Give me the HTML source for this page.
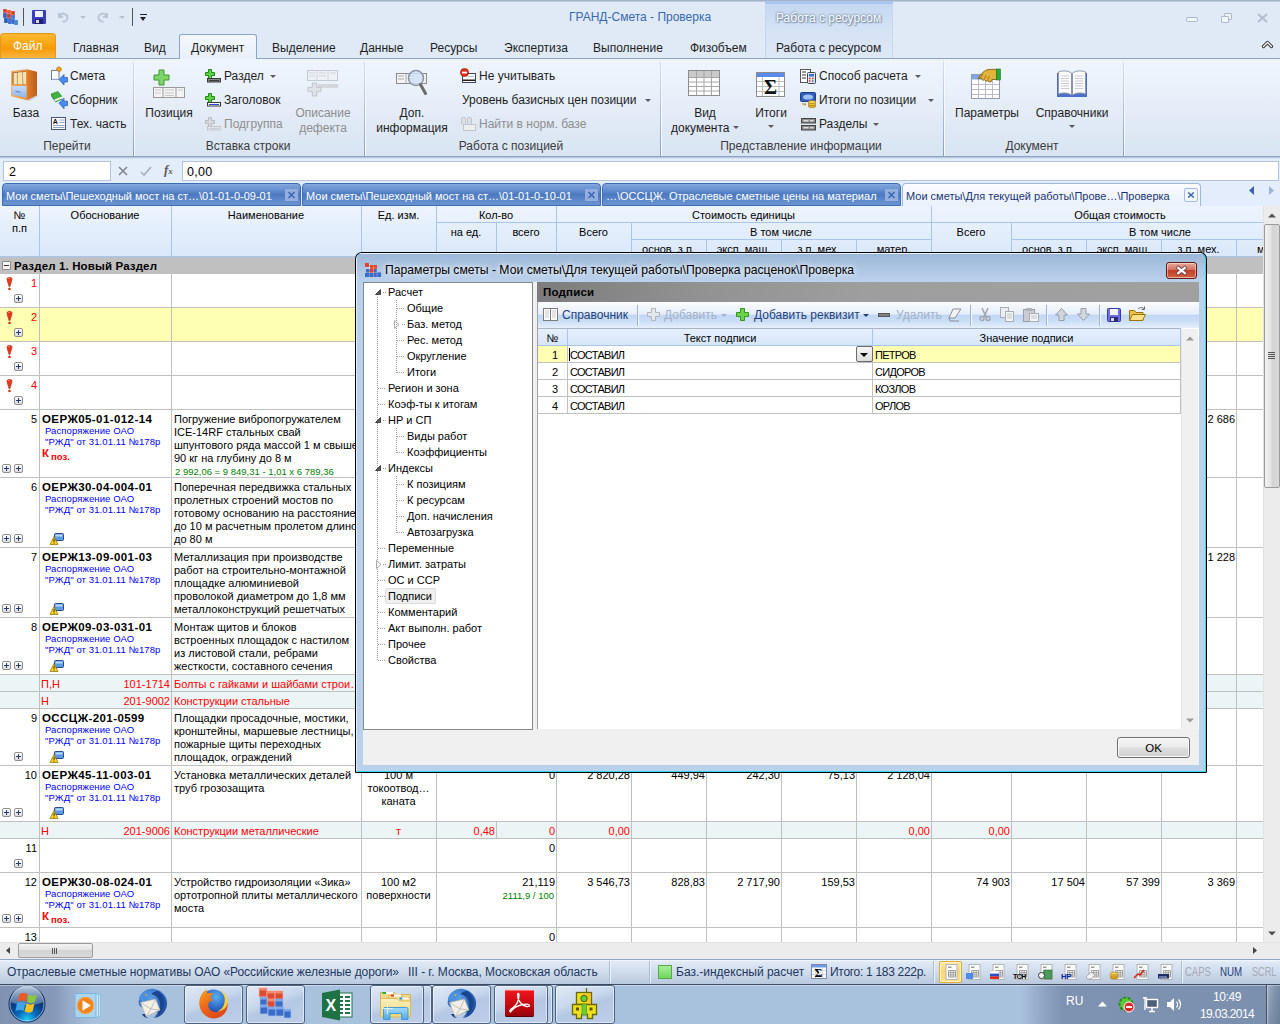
<!DOCTYPE html><html lang="ru"><head><meta charset="utf-8"><title>ГРАНД-Смета - Проверка</title><style>
*{box-sizing:border-box;margin:0;padding:0}
html,body{width:1280px;height:1024px;overflow:hidden}
body{position:relative;background:#dfe9f5;font-family:"Liberation Sans","DejaVu Sans",sans-serif;font-size:11px;color:#000;}
.a{position:absolute;white-space:nowrap}
.rb{position:absolute;white-space:nowrap;font-size:12px;line-height:14px;color:#1e1e1e}
.rb.dis{color:#8e8e8e}
.rb.cc{transform:translateX(-50%);text-align:center}
.t{position:absolute;white-space:nowrap;line-height:13px;font-size:11px;margin-top:1px}
.r{text-align:right}
.c{text-align:center}
.red{color:#f00}
.blue{color:#0000ff}
.grn{color:#008000}
.b{font-weight:bold}
.vl{position:absolute;width:1px;background:#c0c0c0}
.hl{position:absolute;height:1px;background:#c0c0c0}
.sep{position:absolute;top:61px;height:95px;width:2px;background:linear-gradient(#d5dfed,#b5c3d7 50%,#8c9db7) left/1px 100% no-repeat,linear-gradient(#f6f9fd,#f6f9fd) right/1px 100% no-repeat}
.arr{position:absolute;width:0;height:0;border-left:3px solid transparent;border-right:3px solid transparent;border-top:3px solid #5a5a5a}
svg{position:absolute;overflow:visible}
</style></head><body>
<div class="a" style="left:0;top:0;width:1280px;height:58px;background:#dfeaf6"></div>
<div class="a" style="left:0;top:0;width:1280px;height:2px;background:linear-gradient(#9aa8bc,#c9d6e6)"></div>
<div class="a" style="left:765px;top:1px;width:128px;height:57px;background:linear-gradient(#c3d7f1,#d6e3f5 30px,#dde8f6);border-left:1px solid #c9d6e8;border-right:1px solid #c9d6e8"></div>
<div class="a" style="left:765px;top:1px;width:128px;height:3px;background:#a8c6ee"></div>
<div class="rb" style="left:776px;top:11px;color:#fff;text-shadow:0 0 2px #6a7f9c,0 0 3px #7f93ad,1px 1px 1px #8a9ab0">Работа с ресурсом</div>
<div class="rb" style="left:569px;top:10px;color:#3a68ad">ГРАНД-Смета - Проверка</div>
<svg style="left:2px;top:8px" width="17" height="17" viewBox="0 0 17 17"><g stroke="#fff" stroke-opacity=".35" stroke-width=".5"><rect x="1" y="1" width="4" height="4" fill="#d8432f"/><rect x="5" y="2" width="4" height="4" fill="#e65a40"/><rect x="9" y="3" width="4" height="4" fill="#d8432f"/><rect x="1" y="5" width="4" height="5" fill="#3565bd"/><rect x="5" y="6" width="4" height="4" fill="#cf3a2a"/><rect x="9" y="7" width="4" height="4" fill="#3f74d0"/><rect x="2" y="10" width="4" height="5" fill="#2d5bb0"/><rect x="6" y="10" width="4" height="6" fill="#3b6fd0"/><rect x="10" y="11" width="3" height="5" fill="#2d5bb0"/><rect x="12" y="12" width="4" height="5" fill="#4a7fd8"/></g></svg>
<div class="a" style="left:23px;top:8px;width:1px;height:18px;background:#555"></div>
<svg style="left:32px;top:10px" width="14" height="14" viewBox="0 0 14 14"><rect x="0" y="0" width="14" height="14" rx="1" fill="#3c3cc0"/><rect x="3" y="1" width="8" height="6" fill="#f2f2ff"/><rect x="3" y="9" width="8" height="5" fill="#22226a"/><rect x="4" y="10" width="3" height="3" fill="#ddd"/></svg>
<svg style="left:57px;top:11px" width="12" height="12" viewBox="0 0 12 12"><path d="M2 2v4h4M2.5 6a4 4 0 1 1 3 4.5" fill="none" stroke="#bcc7d6" stroke-width="2"/></svg>
<div class="arr" style="left:80px;top:16px;border-top-color:#b7c1cf"></div>
<svg style="left:97px;top:11px" width="12" height="12" viewBox="0 0 12 12"><path d="M10 2v4h-4M9.5 6a4 4 0 1 0 -3 4.5" fill="none" stroke="#bcc7d6" stroke-width="2"/></svg>
<div class="arr" style="left:119px;top:16px;border-top-color:#b7c1cf"></div>
<div class="a" style="left:132px;top:8px;width:1px;height:18px;background:#555"></div>
<div class="a" style="left:140px;top:14px;width:7px;height:1px;background:#222"></div>
<div class="arr" style="left:140px;top:17px;border-top-color:#222;border-left-width:3.5px;border-right-width:3.5px;border-top-width:4px"></div>
<div class="a" style="left:1186px;top:17px;width:12px;height:5px;border:1px solid #aeb9c8;border-radius:2px;background:#f3f6fa"></div>
<div class="a" style="left:1224px;top:13px;width:8px;height:7px;border:1px solid #aeb9c8;border-radius:1px;background:#eef2f8"></div>
<div class="a" style="left:1221px;top:16px;width:8px;height:7px;border:1px solid #aeb9c8;border-radius:1px;background:#f3f6fa"></div>
<svg style="left:1257px;top:13px" width="11" height="10" viewBox="0 0 11 10"><path d="M1 1l9 8M10 1l-9 8" stroke="#b4bfce" stroke-width="2.2" fill="none"/></svg>
<svg style="left:1262px;top:40px" width="11" height="9" viewBox="0 0 11 9"><path d="M1.500 6.500l4-4 4 4" fill="none" stroke="#3a3a3a" stroke-width="3.200" stroke-linecap="round" stroke-linejoin="round"/><path d="M1.500 6.500l4-4 4 4" fill="none" stroke="#fff" stroke-width="1.200" stroke-linecap="round" stroke-linejoin="round"/></svg>
<div class="a" style="left:0;top:58px;width:1280px;height:1px;background:#8ba5c7"></div>
<div class="a" style="left:0;top:33px;width:56px;height:25px;border-radius:4px 4px 0 0;border:1px solid #e39a1c;border-bottom:none;background:linear-gradient(#fbb832,#f9a616 40%,#f59a0a 60%,#fab63a)"></div>
<div class="rb" style="left:13px;top:39px;color:#fff">Файл</div>
<div class="a" style="left:179px;top:34px;width:78px;height:26px;border:1px solid #8ba5c7;border-bottom:none;border-radius:3px 3px 0 0;background:linear-gradient(#f4f8fd,#e8eff9)"></div>
<div class="rb" style="left:73px;top:41px">Главная</div>
<div class="rb" style="left:144px;top:41px">Вид</div>
<div class="rb" style="left:191px;top:41px">Документ</div>
<div class="rb" style="left:272px;top:41px">Выделение</div>
<div class="rb" style="left:360px;top:41px">Данные</div>
<div class="rb" style="left:430px;top:41px">Ресурсы</div>
<div class="rb" style="left:504px;top:41px">Экспертиза</div>
<div class="rb" style="left:593px;top:41px">Выполнение</div>
<div class="rb" style="left:690px;top:41px">Физобъем</div>
<div class="rb" style="left:776px;top:41px">Работа с ресурсом</div>
<div class="a" style="left:0;top:59px;width:1280px;height:97px;background:linear-gradient(#eff5fd,#e8f0fa 35%,#dfe9f5 70%,#d9e5f3)"></div>
<div class="a" style="left:0;top:156px;width:1280px;height:3px;background:linear-gradient(#8da2c0,#8da2c0 1px,#b9c9df 1px,#b9c9df 2px,#d5e1f1 2px)"></div>
<div class="sep" style="left:133px"></div>
<div class="sep" style="left:364px"></div>
<div class="sep" style="left:660px"></div>
<div class="sep" style="left:943px"></div>
<div class="sep" style="left:1123px"></div>
<div class="rb cc" style="left:67px;top:139px;color:#3b3b3b">Перейти</div>
<div class="rb cc" style="left:248px;top:139px;color:#3b3b3b">Вставка строки</div>
<div class="rb cc" style="left:511px;top:139px;color:#3b3b3b">Работа с позицией</div>
<div class="rb cc" style="left:801px;top:139px;color:#3b3b3b">Представление информации</div>
<div class="rb cc" style="left:1032px;top:139px;color:#3b3b3b">Документ</div>
<div class="rb cc" style="left:26px;top:106px">База</div>
<div class="rb" style="left:70px;top:69px">Смета</div>
<div class="rb" style="left:70px;top:93px">Сборник</div>
<div class="rb" style="left:70px;top:117px">Тех. часть</div>
<div class="rb cc" style="left:169px;top:106px">Позиция</div>
<div class="rb" style="left:224px;top:69px">Раздел</div>
<div class="arr" style="left:270px;top:75px"></div>
<div class="rb" style="left:224px;top:93px">Заголовок</div>
<div class="rb dis" style="left:224px;top:117px">Подгруппа</div>
<div class="rb cc dis" style="left:323px;top:106px">Описание</div>
<div class="rb cc dis" style="left:323px;top:121px">дефекта</div>
<div class="rb cc" style="left:412px;top:106px">Доп.</div>
<div class="rb cc" style="left:412px;top:121px">информация</div>
<div class="rb" style="left:479px;top:69px">Не учитывать</div>
<div class="rb" style="left:462px;top:93px">Уровень базисных цен позиции</div>
<div class="arr" style="left:645px;top:99px"></div>
<div class="rb dis" style="left:479px;top:117px">Найти в норм. базе</div>
<div class="rb cc" style="left:705px;top:106px">Вид</div>
<div class="rb" style="left:671px;top:121px">документа</div><div class="arr" style="left:733px;top:126px"></div>
<div class="rb cc" style="left:771px;top:106px">Итоги</div>
<div class="arr" style="left:768px;top:125px"></div>
<div class="rb" style="left:819px;top:69px">Способ расчета</div>
<div class="arr" style="left:915px;top:75px"></div>
<div class="rb" style="left:819px;top:93px">Итоги по позиции</div>
<div class="arr" style="left:928px;top:99px"></div>
<div class="rb" style="left:819px;top:117px">Разделы</div>
<div class="arr" style="left:873px;top:123px"></div>
<div class="rb cc" style="left:987px;top:106px">Параметры</div>
<div class="rb cc" style="left:1072px;top:106px">Справочники</div>
<div class="arr" style="left:1069px;top:125px"></div>
<svg style="left:10px;top:67px" width="30" height="36" viewBox="0 0 30 36"><defs><linearGradient id="gb1" x1="0" x2="1"><stop offset="0" stop-color="#f7b066"/><stop offset="1" stop-color="#ec9040"/></linearGradient><linearGradient id="gb2" x1="0" x2="1"><stop offset="0" stop-color="#e07e2c"/><stop offset="1" stop-color="#bd5c16"/></linearGradient><linearGradient id="gb3" x1="0" y1="0" x2="0" y2="1"><stop offset="0" stop-color="#c4dbf7"/><stop offset="1" stop-color="#8fb4e6"/></linearGradient></defs><path d="M1 4l16-1.800v31l-16-4z" fill="url(#gb1)"/><path d="M17 2.200l10 2.600v23.500l-10 5z" fill="url(#gb2)"/><path d="M2.500 5.500l13.500-1.300v13h-13.500z" fill="#8a5520"/><path d="M3.500 6l3.500-.3v11.500h-3.500zM7.500 5.500l4.500-.5 1 12.200h-5.500zM12.500 5.200l3.500-.4v12.400h-2.700z" fill="#f4e2b0"/><path d="M7.300 5.600v11.600M12.300 5.300l.8 11.900" stroke="#cfa868" stroke-width=".7"/><path d="M2 19h14.500v12l-14.500-3.300z" fill="url(#gb3)"/><path d="M5.500 23.500l5 1.200v1.400l-5-1.200z" fill="#6e8fc4"/><path d="M17 33.300l10-5 2 .3-9 5.400z" fill="#000" fill-opacity=".12"/></svg>
<svg style="left:50px;top:66px" width="19" height="21" viewBox="0 0 19 21"><rect x="1.500" y="4.500" width="7.500" height="9" fill="#fbfcff" stroke="#6f7f9e"/><path d="M2 12.500h7v1h-7z" fill="#c9d3e6"/><path d="M6.500 3.500c0-2 1.500-3 3-2.500c1.500 .5 2.200 1.500 1.800 3c-.5 1.500-2 1.800-3.300 1.300z" fill="#f2a41c" stroke="#a86c0c" stroke-width=".6"/><path d="M9 13.5l5-5v3h3.500v4.500h-3.500v3z" fill="#4a8cec" stroke="#2c62c0" stroke-width=".8" stroke-linejoin="round"/></svg>
<svg style="left:50px;top:90px" width="19" height="21" viewBox="0 0 19 21"><path d="M1 4l7-2.500 4 5-7.500 3z" fill="#42b23e" stroke="#2a8a2a" stroke-width=".6"/><path d="M4.500 9.500l7.500-3v2l-7 3z" fill="#eef4ee"/><path d="M1 4l3.500 5.500l.5 2-4-5.500z" fill="#2c8a2c"/><path d="M5 11.500l7-3 .2 1-7 3z" fill="#2f9a2f"/><path d="M9 13.2l5-5v3h3.500v4.500h-3.500v3z" fill="#4a8cec" stroke="#2c62c0" stroke-width=".8" stroke-linejoin="round"/></svg>
<svg style="left:51px;top:117px" width="15" height="13" viewBox="0 0 15 13"><rect x=".5" y=".5" width="14" height="12" fill="#fdfdff" stroke="#46557a"/><text x="1.800" y="7" font-size="7" font-family="Liberation Sans,sans-serif" font-weight="bold" fill="#111">A</text><path d="M8.500 3h5M8.500 5.500h5M2 8.500h11.500M2 10.500h11.500" stroke="#93a3c6" stroke-width="1"/></svg>
<svg style="left:152px;top:69px" width="34" height="30" viewBox="0 0 34 30"><path d="M7 1h5v5h5v5h-5v5h-5v-5h-5v-5h5z" fill="#7ed36a" stroke="#3c9a2c" stroke-width="1"/><rect x="1.5" y="18.5" width="31" height="10" fill="#f4f4f4" stroke="#9a9a9a"/><path d="M11 18.5v10M24 18.5v10" stroke="#9a9a9a"/><path d="M3 21h6M3 24h6M13 21h9M13 24h9M13 26.5h9M26 21h5" stroke="#c8c8c8"/></svg>
<svg style="left:205px;top:68px" width="17" height="16" viewBox="0 0 17 16"><path d="M3.5 1.5h3v3h3v3h-3v3h-3v-3h-3v-3h3z" fill="#5fd048" stroke="#1f8a12" stroke-width="1"/><rect x="2.500" y="10.500" width="13" height="3.500" fill="#8a8a8a" stroke="#3a3a3a"/><rect x="4" y="12" width="10" height="1" fill="#3a3a3a"/></svg>
<svg style="left:205px;top:92px" width="17" height="16" viewBox="0 0 17 16"><path d="M3.5 1.5h3v3h3v3h-3v3h-3v-3h-3v-3h3z" fill="#5fd048" stroke="#1f8a12" stroke-width="1"/><rect x="2.500" y="10.500" width="13" height="3.500" fill="#fff" stroke="#3a3a3a"/><rect x="4" y="12" width="10" height="1" fill="#2c45d8"/></svg>
<svg style="left:205px;top:116px" width="17" height="16" viewBox="0 0 17 16"><path d="M3.5 1.5h3v3h3v3h-3v3h-3v-3h-3v-3h3z" fill="#d6d9de" stroke="#b9bdc4" stroke-width="1"/><rect x="2.500" y="10.500" width="13" height="3.500" fill="#e3e5e9" stroke="#c3c7cd"/><rect x="4" y="12" width="10" height="1" fill="#c9ccd2"/></svg>
<svg style="left:306px;top:69px" width="34" height="30" viewBox="0 0 34 30"><rect x="1.5" y="1.5" width="30" height="10" fill="#eef1f5" stroke="#c4c9d1"/><path d="M11 1.5v10M22 1.5v10M3 4h6M3 7h6M13 4h7M13 7h7M24 4h6" stroke="#d0d4db"/><rect x="12" y="15" width="20" height="4" fill="#d4d8de"/><path d="M6.33333 14h4.33333v4.33333h4.33333v4.33333h-4.33333v4.33333h-4.33333v-4.33333h-4.33333v-4.33333h4.33333z" fill="#dfe2e7" stroke="#c0c5cd" stroke-width="1"/></svg>
<svg style="left:395px;top:69px" width="36" height="32" viewBox="0 0 36 32"><rect x="1.5" y="4.5" width="30" height="10" fill="#f4f4f4" stroke="#8a8a8a"/><path d="M11 4.5v10M3 7h6M3 10h6M13 7h6M13 10h6" stroke="#aaa"/><circle cx="21" cy="9" r="7.5" fill="#cfe2f7" fill-opacity=".85" stroke="#8b97a8" stroke-width="1.6"/><path d="M25.5 15.5l5 9" stroke="#6a6a6a" stroke-width="3" stroke-linecap="round"/></svg>
<svg style="left:460px;top:68px" width="17" height="16" viewBox="0 0 17 16"><rect x="2.500" y="5.500" width="13" height="9" fill="#fff" stroke="#3c4660"/><rect x="3" y="11.500" width="12" height="1.500" fill="#222"/><path d="M8 8.500h6" stroke="#b8c0d0"/><circle cx="4.500" cy="4.500" r="4" fill="#e23424" stroke="#a01808" stroke-width=".8"/><rect x="2" y="3.700" width="5" height="1.700" fill="#fff"/></svg>
<svg style="left:460px;top:116px" width="17" height="16" viewBox="0 0 17 16"><rect x="3.5" y="8.5" width="12" height="6" fill="#eceef1" stroke="#c2c6cc"/><rect x="1.5" y="1.5" width="4" height="7" rx="1" fill="#dcdfe4" stroke="#bfc3ca"/><rect x="7.5" y="1.5" width="4" height="7" rx="1" fill="#dcdfe4" stroke="#bfc3ca"/></svg>
<svg style="left:688px;top:70px" width="33" height="28" viewBox="0 0 33 28"><rect x=".5" y=".5" width="31" height="25" fill="#fff" stroke="#8c8c8c"/><rect x="1" y="1" width="30" height="6" fill="#c9c9c9"/><path d="M1 7.5h30M1 12h30M1 16.5h30M1 21h30M8.5 1v24M16 1v24M23.5 1v24" stroke="#a6a6a6"/></svg>
<svg style="left:756px;top:72px" width="30" height="26" viewBox="0 0 30 26"><rect x=".5" y=".5" width="28" height="24" fill="#fff" stroke="#8c8c8c"/><rect x="1" y="1" width="27" height="4" fill="#5b8bea"/><path d="M1 9.5h27M1 14.500h27M1 19.500h27M6.500 5v19M23 5v19" stroke="#bdbdbd"/><text x="8" y="22" font-size="20" font-weight="bold" font-family="Liberation Serif,serif" fill="#111">Σ</text></svg>
<svg style="left:800px;top:68px" width="17" height="17" viewBox="0 0 17 17"><rect x=".5" y="1.500" width="10" height="13" fill="#fff" stroke="#555"/><path d="M2 4h4M2 7h4M2 10h4" stroke="#333"/><rect x="7.500" y="4.500" width="8" height="11" rx="1" fill="#dfe6f2" stroke="#445"/><rect x="9" y="6" width="5" height="2.500" fill="#3b6fd0"/><path d="M9 10.500h1.500M12 10.500h1.500M9 13h1.500" stroke="#d03020" stroke-width="1.400"/><path d="M12 13h1.500" stroke="#3060c0" stroke-width="1.400"/></svg>
<svg style="left:800px;top:92px" width="17" height="17" viewBox="0 0 17 17"><rect x=".5" y=".5" width="15" height="9" rx="1" fill="#2f5fc0" stroke="#1c3f8a"/><ellipse cx="8" cy="5" rx="5" ry="2.600" fill="#9ec0f2"/><ellipse cx="12" cy="14" rx="3.800" ry="1.600" fill="#e9b52a" stroke="#9a6c0a" stroke-width=".6"/><ellipse cx="12" cy="12" rx="3.800" ry="1.600" fill="#f2c640" stroke="#9a6c0a" stroke-width=".6"/><ellipse cx="12" cy="10" rx="3.800" ry="1.600" fill="#f7d45a" stroke="#9a6c0a" stroke-width=".6"/><path d="M2 12h4l-1.500 1.500" stroke="#c07a10" fill="none"/></svg>
<svg style="left:801px;top:118px" width="15" height="13" viewBox="0 0 15 13"><rect x=".5" y=".5" width="14" height="4.500" fill="#8a8a8a" stroke="#444"/><path d="M2.500 2.800h5M9 2.800h3.500" stroke="#fff" stroke-width="1"/><rect x=".5" y="7.500" width="14" height="4.500" fill="#8a8a8a" stroke="#444"/><path d="M2.500 9.800h5M9 9.800h3.500" stroke="#fff" stroke-width="1"/></svg>
<svg style="left:971px;top:68px" width="32" height="32" viewBox="0 0 32 32"><rect x=".5" y="6.500" width="28" height="24" fill="#fff" stroke="#8f9bb0"/><rect x="1" y="7" width="27" height="4.500" fill="#7da7ea"/><path d="M1 16.500h27M1 21.500h27M1 26.500h27M7.500 11.500v19M14.500 11.500v19M21.500 11.500v19" stroke="#b9bcc4"/><path d="M7 11c2-4 5-8 10-9.500l8.500-.2v10.200h-4.500l-1 2.500-2.500-.3-.3-1.200-2 .8-1.500-1.500-2 .5-1.200-2z" fill="#e3b33a" stroke="#7a5510" stroke-width=".8" stroke-linejoin="round"/><path d="M12 6l-3 4M15 7.500l-1.500 3M18 8.500l-1 3" stroke="#7a5510" stroke-width=".7" fill="none"/><rect x="25.500" y="1" width="4" height="11" fill="#2aa83a" stroke="#1c7a28" stroke-width=".6"/></svg>
<svg style="left:1056px;top:70px" width="32" height="28" viewBox="0 0 32 28"><path d="M1 3h30v24h-30z" fill="#4a6fc8"/><path d="M2.500 2c5-2 10-1 13 1v22c-3-2-8-3-13-1z" fill="#fdfdfd" stroke="#8a96b0"/><path d="M29.500 2c-5-2-10-1-13 1v22c3-2 8-3 13-1z" fill="#fdfdfd" stroke="#8a96b0"/><path d="M5 6h8M5 8.500h8M5 11h8M5 13.500h8M5 16h8M5 18.500h8M19 6h8M19 8.500h8M19 11h8M19 13.500h8M19 16h8M19 18.500h8" stroke="#b8bcc6" stroke-width=".8"/></svg>
<div class="a" style="left:0;top:159px;width:1280px;height:24px;background:#e4eefb"></div>
<div class="a" style="left:3px;top:161px;width:108px;height:20px;background:#fff;border:1px solid #b4c5db"></div>
<div class="a" style="left:9px;top:165px;font-size:12.500px;line-height:14px">2</div>
<svg style="left:118px;top:166px" width="10" height="10" viewBox="0 0 10 10"><path d="M1 1l8 8M9 1l-8 8" stroke="#7f8793" stroke-width="1.600"/></svg>
<svg style="left:140px;top:166px" width="12" height="10" viewBox="0 0 12 10"><path d="M1 6l3 3 7-8" stroke="#a9afb8" stroke-width="1.600" fill="none"/></svg>
<div class="a" style="left:164px;top:163px;font-family:'Liberation Serif',serif;font-style:italic;font-weight:bold;font-size:13px;line-height:14px;color:#5a5a5a">f<span style="font-size:9px">x</span></div>
<div class="a" style="left:182px;top:161px;width:1097px;height:20px;background:#fff;border:1px solid #b4c5db"></div>
<div class="a" style="left:187px;top:165px;font-size:12.500px;line-height:14px;letter-spacing:.3px">0,00</div>
<div class="a" style="left:0;top:183px;width:1280px;height:23px;background:#e3edfb"></div>
<div class="a" style="left:2px;top:183px;width:299px;height:23px;border:1px solid #3f6cb4;border-radius:4px 4px 0 0;background:linear-gradient(#8fb0e0,#7da2da 1px,#6690d0 6px,#4b78bf 50%,#5c88ca 75%,#6a93d0)"></div>
<div class="a" style="left:6px;top:189px;font-size:11px;line-height:14px;color:#fff">Мои сметы\Пешеходный мост на ст…\01-01-0-09-01</div>
<svg style="left:285px;top:189px" width="13" height="12" viewBox="0 0 13 12"><rect x="0" y="0" width="13" height="12" fill="#93aede"/><path d="M3.500 3l6 6M9.500 3l-6 6" stroke="#3c69b3" stroke-width="1.700"/></svg>
<div class="a" style="left:302px;top:183px;width:299px;height:23px;border:1px solid #3f6cb4;border-radius:4px 4px 0 0;background:linear-gradient(#8fb0e0,#7da2da 1px,#6690d0 6px,#4b78bf 50%,#5c88ca 75%,#6a93d0)"></div>
<div class="a" style="left:306px;top:189px;font-size:11px;line-height:14px;color:#fff">Мои сметы\Пешеходный мост на ст…\01-01-0-10-01</div>
<svg style="left:585px;top:189px" width="13" height="12" viewBox="0 0 13 12"><rect x="0" y="0" width="13" height="12" fill="#93aede"/><path d="M3.500 3l6 6M9.500 3l-6 6" stroke="#3c69b3" stroke-width="1.700"/></svg>
<div class="a" style="left:602px;top:183px;width:299px;height:23px;border:1px solid #3f6cb4;border-radius:4px 4px 0 0;background:linear-gradient(#8fb0e0,#7da2da 1px,#6690d0 6px,#4b78bf 50%,#5c88ca 75%,#6a93d0)"></div>
<div class="a" style="left:606px;top:189px;font-size:11px;line-height:14px;color:#fff">…\ОССЦЖ. Отраслевые сметные цены на материал</div>
<svg style="left:885px;top:189px" width="13" height="12" viewBox="0 0 13 12"><rect x="0" y="0" width="13" height="12" fill="#93aede"/><path d="M3.500 3l6 6M9.500 3l-6 6" stroke="#3c69b3" stroke-width="1.700"/></svg>
<div class="a" style="left:902px;top:183px;width:299px;height:23px;border:1px solid #9db7dd;border-bottom:none;border-radius:4px 4px 0 0;background:linear-gradient(#fafcff,#e9f1fc)"></div>
<div class="a" style="left:906px;top:189px;font-size:11px;line-height:14px;color:#1b3572">Мои сметы\Для текущей работы\Прове…\Проверка</div>
<svg style="left:1184px;top:188px" width="14" height="14" viewBox="0 0 14 14"><rect x=".5" y=".5" width="13" height="13" rx="1.500" fill="#f1f6fd" stroke="#a6bee4"/><path d="M4.200 4.500l5.600 5M9.800 4.500l-5.600 5" stroke="#3c64ac" stroke-width="1.600"/></svg>
<svg style="left:1249px;top:186px" width="6" height="9" viewBox="0 0 6 9"><path d="M5 0v9l-5-4.500z" fill="#3a62b0"/></svg>
<svg style="left:1268px;top:186px" width="6" height="9" viewBox="0 0 6 9"><path d="M1 0v9l5-4.500z" fill="#9fb4d6"/></svg>
<div class="a" style="left:0;top:206px;width:1263px;height:737px;background:#fff"></div>
<div class="a" style="left:0;top:206px;width:1263px;height:51px;background:linear-gradient(#eef4fd,#e3eefc 50%,#dbe8fb);border-bottom:1px solid #a8c5ec"></div>
<div class="a" style="left:39px;top:206px;width:1px;height:51px;background:#a8c5ec"></div>
<div class="a" style="left:171px;top:206px;width:1px;height:51px;background:#a8c5ec"></div>
<div class="a" style="left:361px;top:206px;width:1px;height:51px;background:#a8c5ec"></div>
<div class="a" style="left:436px;top:206px;width:1px;height:51px;background:#a8c5ec"></div>
<div class="a" style="left:556px;top:206px;width:1px;height:51px;background:#a8c5ec"></div>
<div class="a" style="left:931px;top:206px;width:1px;height:51px;background:#a8c5ec"></div>
<div class="a" style="left:496px;top:222px;width:1px;height:35px;background:#a8c5ec"></div>
<div class="a" style="left:631px;top:222px;width:1px;height:35px;background:#a8c5ec"></div>
<div class="a" style="left:1011px;top:222px;width:1px;height:35px;background:#a8c5ec"></div>
<div class="a" style="left:706px;top:239px;width:1px;height:18px;background:#a8c5ec"></div>
<div class="a" style="left:781px;top:239px;width:1px;height:18px;background:#a8c5ec"></div>
<div class="a" style="left:856px;top:239px;width:1px;height:18px;background:#a8c5ec"></div>
<div class="a" style="left:1086px;top:239px;width:1px;height:18px;background:#a8c5ec"></div>
<div class="a" style="left:1161px;top:239px;width:1px;height:18px;background:#a8c5ec"></div>
<div class="a" style="left:1236px;top:239px;width:1px;height:18px;background:#a8c5ec"></div>
<div class="a" style="left:436px;top:222px;width:827px;height:1px;background:#a8c5ec"></div>
<div class="a" style="left:631px;top:239px;width:300px;height:1px;background:#a8c5ec"></div>
<div class="a" style="left:1011px;top:239px;width:252px;height:1px;background:#a8c5ec"></div>
<div class="t c" style="left:0px;top:208px;width:39px">№</div>
<div class="t c" style="left:0px;top:221px;width:39px">п.п</div>
<div class="t c" style="left:39px;top:208px;width:132px">Обоснование</div>
<div class="t c" style="left:171px;top:208px;width:190px">Наименование</div>
<div class="t c" style="left:361px;top:208px;width:75px">Ед. изм.</div>
<div class="t c" style="left:436px;top:208px;width:120px">Кол-во</div>
<div class="t c" style="left:436px;top:225px;width:60px">на ед.</div>
<div class="t c" style="left:496px;top:225px;width:60px">всего</div>
<div class="t c" style="left:556px;top:208px;width:375px">Стоимость единицы</div>
<div class="t c" style="left:556px;top:225px;width:75px">Всего</div>
<div class="t c" style="left:631px;top:225px;width:300px">В том числе</div>
<div class="t c" style="left:631px;top:242px;width:75px">основ. з.п.</div>
<div class="t c" style="left:706px;top:242px;width:75px">эксп. маш.</div>
<div class="t c" style="left:781px;top:242px;width:75px">з.п. мех.</div>
<div class="t c" style="left:856px;top:242px;width:75px">матер.</div>
<div class="t c" style="left:931px;top:208px;width:378px">Общая стоимость</div>
<div class="t c" style="left:931px;top:225px;width:80px">Всего</div>
<div class="t c" style="left:1011px;top:225px;width:298px">В том числе</div>
<div class="t c" style="left:1011px;top:242px;width:75px">основ. з.п.</div>
<div class="t c" style="left:1086px;top:242px;width:75px">эксп. маш.</div>
<div class="t c" style="left:1161px;top:242px;width:75px">з.п. мех.</div>
<div class="t" style="left:1257px;top:242px">м</div>
<div class="a" style="left:0;top:257px;width:1263px;height:17px;background:#c0c0c0"></div>
<div class="a" style="left:2px;top:261px;width:9px;height:9px;border:1px solid #8a8a8a;background:#f4f4f4;border-radius:1px"></div><div class="a" style="left:4px;top:265px;width:5px;height:1px;background:#333"></div>
<div class="t b" style="left:14px;top:259px;font-size:11.500px;letter-spacing:.14px">Раздел 1. Новый Раздел</div>
<div class="hl" style="left:0;top:307px;width:1263px"></div>
<div class="a" style="left:0;top:308px;width:1263px;height:33px;background:#ffffb3"></div>
<div class="hl" style="left:0;top:341px;width:1263px"></div>
<div class="hl" style="left:0;top:375px;width:1263px"></div>
<div class="hl" style="left:0;top:409px;width:1263px"></div>
<div class="hl" style="left:0;top:477px;width:1263px"></div>
<div class="hl" style="left:0;top:547px;width:1263px"></div>
<div class="hl" style="left:0;top:617px;width:1263px"></div>
<div class="hl" style="left:0;top:674px;width:1263px"></div>
<div class="a" style="left:0;top:675px;width:1263px;height:16px;background:#ecf5f6"></div>
<div class="hl" style="left:0;top:691px;width:1263px"></div>
<div class="a" style="left:0;top:692px;width:1263px;height:16px;background:#ecf5f6"></div>
<div class="hl" style="left:0;top:708px;width:1263px"></div>
<div class="hl" style="left:0;top:765px;width:1263px"></div>
<div class="hl" style="left:0;top:821px;width:1263px"></div>
<div class="a" style="left:0;top:822px;width:1263px;height:16px;background:#ecf5f6"></div>
<div class="hl" style="left:0;top:838px;width:1263px"></div>
<div class="hl" style="left:0;top:872px;width:1263px"></div>
<div class="hl" style="left:0;top:927px;width:1263px"></div>
<div class="vl" style="left:39px;top:274px;height:668px"></div>
<div class="vl" style="left:171px;top:274px;height:668px"></div>
<div class="vl" style="left:361px;top:274px;height:668px"></div>
<div class="vl" style="left:436px;top:274px;height:668px"></div>
<div class="vl" style="left:496px;top:822px;height:16px"></div>
<div class="vl" style="left:556px;top:274px;height:668px"></div>
<div class="vl" style="left:631px;top:274px;height:668px"></div>
<div class="vl" style="left:706px;top:274px;height:668px"></div>
<div class="vl" style="left:781px;top:274px;height:668px"></div>
<div class="vl" style="left:856px;top:274px;height:668px"></div>
<div class="vl" style="left:931px;top:274px;height:668px"></div>
<div class="vl" style="left:1011px;top:274px;height:668px"></div>
<div class="vl" style="left:1086px;top:274px;height:668px"></div>
<div class="vl" style="left:1161px;top:274px;height:668px"></div>
<div class="vl" style="left:1236px;top:274px;height:668px"></div>
<svg style="left:6px;top:277px" width="7" height="14" viewBox="0 0 7 14"><path d="M1 1.500c0-1.500 5-1.500 5 0c0 3-1.500 5-2 8h-1c-.5-3-2-5-2-8z" fill="#e8391d" stroke="#a3220c" stroke-width=".6"/><circle cx="3.500" cy="12" r="1.300" fill="#d63015"/><path d="M2.200 2c.2-.8 1-.9 1.500-.7" stroke="#ffb09a" stroke-width=".8" fill="none"/></svg>
<div class="t r red" style="left:0;top:276px;width:37px">1</div>
<div class="a" style="left:14px;top:294px;width:9px;height:9px;border:1px solid #8e8e8e;border-radius:2px;background:linear-gradient(#fff,#dcdcdc)"></div>
<div class="a" style="left:16px;top:298px;width:5px;height:1px;background:#223a6e"></div><div class="a" style="left:18px;top:296px;width:1px;height:5px;background:#223a6e"></div>
<svg style="left:6px;top:311px" width="7" height="14" viewBox="0 0 7 14"><path d="M1 1.500c0-1.500 5-1.500 5 0c0 3-1.500 5-2 8h-1c-.5-3-2-5-2-8z" fill="#e8391d" stroke="#a3220c" stroke-width=".6"/><circle cx="3.500" cy="12" r="1.300" fill="#d63015"/><path d="M2.200 2c.2-.8 1-.9 1.500-.7" stroke="#ffb09a" stroke-width=".8" fill="none"/></svg>
<div class="t r red" style="left:0;top:310px;width:37px">2</div>
<div class="a" style="left:14px;top:328px;width:9px;height:9px;border:1px solid #8e8e8e;border-radius:2px;background:linear-gradient(#fff,#dcdcdc)"></div>
<div class="a" style="left:16px;top:332px;width:5px;height:1px;background:#223a6e"></div><div class="a" style="left:18px;top:330px;width:1px;height:5px;background:#223a6e"></div>
<svg style="left:6px;top:345px" width="7" height="14" viewBox="0 0 7 14"><path d="M1 1.500c0-1.500 5-1.500 5 0c0 3-1.500 5-2 8h-1c-.5-3-2-5-2-8z" fill="#e8391d" stroke="#a3220c" stroke-width=".6"/><circle cx="3.500" cy="12" r="1.300" fill="#d63015"/><path d="M2.200 2c.2-.8 1-.9 1.500-.7" stroke="#ffb09a" stroke-width=".8" fill="none"/></svg>
<div class="t r red" style="left:0;top:344px;width:37px">3</div>
<div class="a" style="left:14px;top:362px;width:9px;height:9px;border:1px solid #8e8e8e;border-radius:2px;background:linear-gradient(#fff,#dcdcdc)"></div>
<div class="a" style="left:16px;top:366px;width:5px;height:1px;background:#223a6e"></div><div class="a" style="left:18px;top:364px;width:1px;height:5px;background:#223a6e"></div>
<svg style="left:6px;top:379px" width="7" height="14" viewBox="0 0 7 14"><path d="M1 1.500c0-1.500 5-1.500 5 0c0 3-1.500 5-2 8h-1c-.5-3-2-5-2-8z" fill="#e8391d" stroke="#a3220c" stroke-width=".6"/><circle cx="3.500" cy="12" r="1.300" fill="#d63015"/><path d="M2.200 2c.2-.8 1-.9 1.500-.7" stroke="#ffb09a" stroke-width=".8" fill="none"/></svg>
<div class="t r red" style="left:0;top:378px;width:37px">4</div>
<div class="a" style="left:14px;top:396px;width:9px;height:9px;border:1px solid #8e8e8e;border-radius:2px;background:linear-gradient(#fff,#dcdcdc)"></div>
<div class="a" style="left:16px;top:400px;width:5px;height:1px;background:#223a6e"></div><div class="a" style="left:18px;top:398px;width:1px;height:5px;background:#223a6e"></div>
<div class="t r" style="left:0;top:412px;width:37px">5</div>
<div class="t b" style="left:42px;top:412px;font-size:11.500px;letter-spacing:.42px">ОЕРЖ05-01-012-14</div>
<div class="t blue" style="left:45px;top:424px;font-size:9.500px;line-height:11px;letter-spacing:.1px">Распоряжение ОАО<br>"РЖД" от 31.01.11 №178р</div>
<div class="t b red" style="left:42px;top:446px;font-size:11.500px">К<span style="font-size:9.500px;position:relative;top:3px;left:2px">поз.</span></div>
<div class="a" style="left:2px;top:464px;width:9px;height:9px;border:1px solid #8e8e8e;border-radius:2px;background:linear-gradient(#fff,#dcdcdc)"></div>
<div class="a" style="left:4px;top:468px;width:5px;height:1px;background:#223a6e"></div><div class="a" style="left:6px;top:466px;width:1px;height:5px;background:#223a6e"></div>
<div class="a" style="left:14px;top:464px;width:9px;height:9px;border:1px solid #8e8e8e;border-radius:2px;background:linear-gradient(#fff,#dcdcdc)"></div>
<div class="a" style="left:16px;top:468px;width:5px;height:1px;background:#223a6e"></div><div class="a" style="left:18px;top:466px;width:1px;height:5px;background:#223a6e"></div>
<div class="t" style="left:174px;top:412px">Погружение вибропогружателем<br>ICE-14RF стальных свай<br>шпунтового ряда массой 1 м свыше<br>90 кг на глубину до 8 м</div>
<div class="t grn" style="left:175px;top:464px;font-size:9.500px;letter-spacing:0">2 992,06 = 9 849,31 - 1,01 x 6 789,36</div>
<div class="t r" style="left:1161px;top:412px;width:74px">2 686</div>
<div class="t r" style="left:0;top:480px;width:37px">6</div>
<div class="t b" style="left:42px;top:480px;font-size:11.500px;letter-spacing:.42px">ОЕРЖ30-04-004-01</div>
<div class="t blue" style="left:45px;top:492px;font-size:9.500px;line-height:11px;letter-spacing:.1px">Распоряжение ОАО<br>"РЖД" от 31.01.11 №178р</div>
<svg style="left:50px;top:533px" width="14" height="12" viewBox="0 0 14 12"><rect x="4.500" y=".5" width="9" height="7" rx="1" fill="#5b9be6" stroke="#274c86"/><rect x="5.500" y="1.500" width="7" height="2" fill="#b8d6f8"/><path d="M4 3.500l4 8h-8z" fill="#f7d21e" stroke="#8a6d00" stroke-width=".7"/><rect x="3.600" y="6" width=".9" height="3" fill="#222"/><rect x="3.600" y="9.700" width=".9" height=".9" fill="#222"/></svg>
<div class="a" style="left:2px;top:534px;width:9px;height:9px;border:1px solid #8e8e8e;border-radius:2px;background:linear-gradient(#fff,#dcdcdc)"></div>
<div class="a" style="left:4px;top:538px;width:5px;height:1px;background:#223a6e"></div><div class="a" style="left:6px;top:536px;width:1px;height:5px;background:#223a6e"></div>
<div class="a" style="left:14px;top:534px;width:9px;height:9px;border:1px solid #8e8e8e;border-radius:2px;background:linear-gradient(#fff,#dcdcdc)"></div>
<div class="a" style="left:16px;top:538px;width:5px;height:1px;background:#223a6e"></div><div class="a" style="left:18px;top:536px;width:1px;height:5px;background:#223a6e"></div>
<div class="t" style="left:174px;top:480px">Поперечная передвижка стальных<br>пролетных строений мостов по<br>готовому основанию на расстояние<br>до 10 м расчетным пролетом длиной<br>до 80 м</div>
<div class="t r" style="left:0;top:550px;width:37px">7</div>
<div class="t b" style="left:42px;top:550px;font-size:11.500px;letter-spacing:.42px">ОЕРЖ13-09-001-03</div>
<div class="t blue" style="left:45px;top:562px;font-size:9.500px;line-height:11px;letter-spacing:.1px">Распоряжение ОАО<br>"РЖД" от 31.01.11 №178р</div>
<svg style="left:50px;top:603px" width="14" height="12" viewBox="0 0 14 12"><rect x="4.500" y=".5" width="9" height="7" rx="1" fill="#5b9be6" stroke="#274c86"/><rect x="5.500" y="1.500" width="7" height="2" fill="#b8d6f8"/><path d="M4 3.500l4 8h-8z" fill="#f7d21e" stroke="#8a6d00" stroke-width=".7"/><rect x="3.600" y="6" width=".9" height="3" fill="#222"/><rect x="3.600" y="9.700" width=".9" height=".9" fill="#222"/></svg>
<div class="a" style="left:2px;top:604px;width:9px;height:9px;border:1px solid #8e8e8e;border-radius:2px;background:linear-gradient(#fff,#dcdcdc)"></div>
<div class="a" style="left:4px;top:608px;width:5px;height:1px;background:#223a6e"></div><div class="a" style="left:6px;top:606px;width:1px;height:5px;background:#223a6e"></div>
<div class="a" style="left:14px;top:604px;width:9px;height:9px;border:1px solid #8e8e8e;border-radius:2px;background:linear-gradient(#fff,#dcdcdc)"></div>
<div class="a" style="left:16px;top:608px;width:5px;height:1px;background:#223a6e"></div><div class="a" style="left:18px;top:606px;width:1px;height:5px;background:#223a6e"></div>
<div class="t" style="left:174px;top:550px">Металлизация при производстве<br>работ на строительно-монтажной<br>площадке алюминиевой<br>проволокой диаметром до 1,8 мм<br>металлоконструкций решетчатых</div>
<div class="t r" style="left:1161px;top:550px;width:74px">1 228</div>
<div class="t r" style="left:0;top:620px;width:37px">8</div>
<div class="t b" style="left:42px;top:620px;font-size:11.500px;letter-spacing:.42px">ОЕРЖ09-03-031-01</div>
<div class="t blue" style="left:45px;top:632px;font-size:9.500px;line-height:11px;letter-spacing:.1px">Распоряжение ОАО<br>"РЖД" от 31.01.11 №178р</div>
<svg style="left:50px;top:660px" width="14" height="12" viewBox="0 0 14 12"><rect x="4.500" y=".5" width="9" height="7" rx="1" fill="#5b9be6" stroke="#274c86"/><rect x="5.500" y="1.500" width="7" height="2" fill="#b8d6f8"/><path d="M4 3.500l4 8h-8z" fill="#f7d21e" stroke="#8a6d00" stroke-width=".7"/><rect x="3.600" y="6" width=".9" height="3" fill="#222"/><rect x="3.600" y="9.700" width=".9" height=".9" fill="#222"/></svg>
<div class="a" style="left:2px;top:661px;width:9px;height:9px;border:1px solid #8e8e8e;border-radius:2px;background:linear-gradient(#fff,#dcdcdc)"></div>
<div class="a" style="left:4px;top:665px;width:5px;height:1px;background:#223a6e"></div><div class="a" style="left:6px;top:663px;width:1px;height:5px;background:#223a6e"></div>
<div class="a" style="left:14px;top:661px;width:9px;height:9px;border:1px solid #8e8e8e;border-radius:2px;background:linear-gradient(#fff,#dcdcdc)"></div>
<div class="a" style="left:16px;top:665px;width:5px;height:1px;background:#223a6e"></div><div class="a" style="left:18px;top:663px;width:1px;height:5px;background:#223a6e"></div>
<div class="t" style="left:174px;top:620px">Монтаж щитов и блоков<br>встроенных площадок с настилом<br>из листовой стали, ребрами<br>жесткости, составного сечения</div>
<div class="t red" style="left:41px;top:677px">П,Н</div>
<div class="t red r" style="left:39px;top:677px;width:131px">101-1714</div>
<div class="t red" style="left:174px;top:677px">Болты с гайками и шайбами строи…</div>
<div class="t red" style="left:41px;top:694px">Н</div>
<div class="t red r" style="left:39px;top:694px;width:131px">201-9002</div>
<div class="t red" style="left:174px;top:694px">Конструкции стальные</div>
<div class="t r" style="left:0;top:711px;width:37px">9</div>
<div class="t b" style="left:42px;top:711px;font-size:11.500px;letter-spacing:.42px">ОССЦЖ-201-0599</div>
<div class="t blue" style="left:45px;top:723px;font-size:9.500px;line-height:11px;letter-spacing:.1px">Распоряжение ОАО<br>"РЖД" от 31.01.11 №178р</div>
<svg style="left:50px;top:751px" width="14" height="12" viewBox="0 0 14 12"><rect x="4.500" y=".5" width="9" height="7" rx="1" fill="#5b9be6" stroke="#274c86"/><rect x="5.500" y="1.500" width="7" height="2" fill="#b8d6f8"/><path d="M4 3.500l4 8h-8z" fill="#f7d21e" stroke="#8a6d00" stroke-width=".7"/><rect x="3.600" y="6" width=".9" height="3" fill="#222"/><rect x="3.600" y="9.700" width=".9" height=".9" fill="#222"/></svg>
<div class="a" style="left:14px;top:752px;width:9px;height:9px;border:1px solid #8e8e8e;border-radius:2px;background:linear-gradient(#fff,#dcdcdc)"></div>
<div class="a" style="left:16px;top:756px;width:5px;height:1px;background:#223a6e"></div><div class="a" style="left:18px;top:754px;width:1px;height:5px;background:#223a6e"></div>
<div class="t" style="left:174px;top:711px">Площадки просадочные, мостики,<br>кронштейны, маршевые лестницы,<br>пожарные щиты переходных<br>площадок, ограждений</div>
<div class="t r" style="left:0;top:768px;width:37px">10</div>
<div class="t b" style="left:42px;top:768px;font-size:11.500px;letter-spacing:.42px">ОЕРЖ45-11-003-01</div>
<div class="t blue" style="left:45px;top:780px;font-size:9.500px;line-height:11px;letter-spacing:.1px">Распоряжение ОАО<br>"РЖД" от 31.01.11 №178р</div>
<svg style="left:50px;top:807px" width="14" height="12" viewBox="0 0 14 12"><rect x="4.500" y=".5" width="9" height="7" rx="1" fill="#5b9be6" stroke="#274c86"/><rect x="5.500" y="1.500" width="7" height="2" fill="#b8d6f8"/><path d="M4 3.500l4 8h-8z" fill="#f7d21e" stroke="#8a6d00" stroke-width=".7"/><rect x="3.600" y="6" width=".9" height="3" fill="#222"/><rect x="3.600" y="9.700" width=".9" height=".9" fill="#222"/></svg>
<div class="a" style="left:2px;top:808px;width:9px;height:9px;border:1px solid #8e8e8e;border-radius:2px;background:linear-gradient(#fff,#dcdcdc)"></div>
<div class="a" style="left:4px;top:812px;width:5px;height:1px;background:#223a6e"></div><div class="a" style="left:6px;top:810px;width:1px;height:5px;background:#223a6e"></div>
<div class="a" style="left:14px;top:808px;width:9px;height:9px;border:1px solid #8e8e8e;border-radius:2px;background:linear-gradient(#fff,#dcdcdc)"></div>
<div class="a" style="left:16px;top:812px;width:5px;height:1px;background:#223a6e"></div><div class="a" style="left:18px;top:810px;width:1px;height:5px;background:#223a6e"></div>
<div class="t" style="left:174px;top:768px">Установка металлических деталей<br>труб грозозащита</div>
<div class="t c" style="left:361px;top:768px;width:75px">100 м<br>токоотвод…<br>каната</div>
<div class="t r" style="left:496px;top:768px;width:59px">0</div>
<div class="t r" style="left:556px;top:768px;width:74px">2 820,28</div>
<div class="t r" style="left:631px;top:768px;width:74px">449,94</div>
<div class="t r" style="left:706px;top:768px;width:74px">242,30</div>
<div class="t r" style="left:781px;top:768px;width:74px">75,13</div>
<div class="t r" style="left:856px;top:768px;width:74px">2 128,04</div>
<div class="t red" style="left:41px;top:824px">Н</div>
<div class="t red r" style="left:39px;top:824px;width:131px">201-9006</div>
<div class="t red" style="left:174px;top:824px">Конструкции металлические</div>
<div class="t c red" style="left:361px;top:824px;width:75px">т</div>
<div class="t r red" style="left:436px;top:824px;width:59px">0,48</div>
<div class="t r red" style="left:496px;top:824px;width:59px">0</div>
<div class="t r red" style="left:556px;top:824px;width:74px">0,00</div>
<div class="t r red" style="left:856px;top:824px;width:74px">0,00</div>
<div class="t r red" style="left:931px;top:824px;width:79px">0,00</div>
<div class="t r" style="left:0;top:841px;width:37px">11</div>
<div class="a" style="left:14px;top:859px;width:9px;height:9px;border:1px solid #8e8e8e;border-radius:2px;background:linear-gradient(#fff,#dcdcdc)"></div>
<div class="a" style="left:16px;top:863px;width:5px;height:1px;background:#223a6e"></div><div class="a" style="left:18px;top:861px;width:1px;height:5px;background:#223a6e"></div>
<div class="t r" style="left:496px;top:841px;width:59px">0</div>
<div class="t r" style="left:0;top:875px;width:37px">12</div>
<div class="t b" style="left:42px;top:875px;font-size:11.500px;letter-spacing:.42px">ОЕРЖ30-08-024-01</div>
<div class="t blue" style="left:45px;top:887px;font-size:9.500px;line-height:11px;letter-spacing:.1px">Распоряжение ОАО<br>"РЖД" от 31.01.11 №178р</div>
<div class="t b red" style="left:42px;top:909px;font-size:11.500px">К<span style="font-size:9.500px;position:relative;top:3px;left:2px">поз.</span></div>
<div class="a" style="left:2px;top:914px;width:9px;height:9px;border:1px solid #8e8e8e;border-radius:2px;background:linear-gradient(#fff,#dcdcdc)"></div>
<div class="a" style="left:4px;top:918px;width:5px;height:1px;background:#223a6e"></div><div class="a" style="left:6px;top:916px;width:1px;height:5px;background:#223a6e"></div>
<div class="a" style="left:14px;top:914px;width:9px;height:9px;border:1px solid #8e8e8e;border-radius:2px;background:linear-gradient(#fff,#dcdcdc)"></div>
<div class="a" style="left:16px;top:918px;width:5px;height:1px;background:#223a6e"></div><div class="a" style="left:18px;top:916px;width:1px;height:5px;background:#223a6e"></div>
<div class="t" style="left:174px;top:875px">Устройство гидроизоляции «Зика»<br>ортотропной плиты металлического<br>моста</div>
<div class="t c" style="left:361px;top:875px;width:75px">100 м2<br>поверхности</div>
<div class="t r" style="left:496px;top:875px;width:59px">21,119</div>
<div class="t grn r" style="left:496px;top:888px;width:58px;font-size:9.500px">2111,9 / 100</div>
<div class="t r" style="left:556px;top:875px;width:74px">3 546,73</div>
<div class="t r" style="left:631px;top:875px;width:74px">828,83</div>
<div class="t r" style="left:706px;top:875px;width:74px">2 717,90</div>
<div class="t r" style="left:781px;top:875px;width:74px">159,53</div>
<div class="t r" style="left:931px;top:875px;width:79px">74 903</div>
<div class="t r" style="left:1011px;top:875px;width:74px">17 504</div>
<div class="t r" style="left:1086px;top:875px;width:74px">57 399</div>
<div class="t r" style="left:1161px;top:875px;width:74px">3 369</div>
<div class="t r" style="left:0;top:930px;width:37px">13</div>
<div class="t r" style="left:496px;top:930px;width:59px">0</div>
<div class="a" style="left:1263px;top:206px;width:17px;height:737px;background:#ececec;border-left:1px solid #e2e2e2"></div>
<div class="a" style="left:1264px;top:224px;width:16px;height:264px;border:1px solid #9b9b9b;border-radius:2px;background:linear-gradient(90deg,#f3f3f3,#e3e3e3 45%,#d3d3d3 50%,#dadada)"></div>
<div class="a" style="left:1268px;top:352px;width:7px;height:1px;background:#555"></div>
<div class="a" style="left:1268px;top:354px;width:7px;height:1px;background:#555"></div>
<div class="a" style="left:1268px;top:356px;width:7px;height:1px;background:#555"></div>
<div class="a" style="left:1268px;top:358px;width:7px;height:1px;background:#555"></div>
<svg style="left:1268px;top:213px" width="8" height="5" viewBox="0 0 8 5"><path d="M0 4.500l4-4 4 4z" fill="#505050"/></svg>
<svg style="left:1268px;top:931px" width="8" height="5" viewBox="0 0 8 5"><path d="M0 .5l4 4 4-4z" fill="#505050"/></svg>
<div class="a" style="left:0;top:942px;width:1280px;height:17px;background:#ececec;border-top:1px solid #e2e2e2"></div>
<div class="a" style="left:18px;top:943px;width:75px;height:15px;border:1px solid #9b9b9b;border-radius:2px;background:linear-gradient(#f3f3f3,#e3e3e3 45%,#d3d3d3 50%,#dadada)"></div>
<div class="a" style="left:52px;top:948px;width:1px;height:6px;background:#555"></div>
<div class="a" style="left:54px;top:948px;width:1px;height:6px;background:#555"></div>
<div class="a" style="left:56px;top:948px;width:1px;height:6px;background:#555"></div>
<svg style="left:6px;top:947px" width="4" height="7" viewBox="0 0 4 7"><path d="M4 0v7l-4-3.500z" fill="#444"/></svg>
<svg style="left:1253px;top:947px" width="4" height="7" viewBox="0 0 4 7"><path d="M0 0v7l4-3.500z" fill="#444"/></svg>
<div class="a" style="left:355px;top:252px;width:852px;height:521px;border-radius:7px 7px 1px 1px;background:#000;"></div>
<div class="a" style="left:356px;top:253px;width:850px;height:519px;border-radius:6px 6px 0 0;background:linear-gradient(#eaf3fb,#eaf3fb 1px,transparent 1px),linear-gradient(#9bb6d7,#a9c2e0 12px,#bad1ec 28px,#b9d1ea 30px);border-left:1px solid #e4eef9;border-right:1px solid #35d6e6;border-bottom:1px solid #35d6e6"></div>
<svg style="left:365px;top:263px" width="16" height="14" viewBox="0 0 16 14"><g fill="#e2422c"><rect x="0" y="0" width="4" height="4"/><rect x="5" y="2" width="4" height="4"/><rect x="9" y="2" width="3" height="4"/><rect x="5" y="6" width="4" height="4"/></g><g fill="#3c6cc8"><rect x="1" y="6" width="4" height="4"/><rect x="9" y="6" width="3" height="4"/><rect x="0" y="10" width="16" height="4"/><rect x="12" y="9" width="4" height="2"/></g><path d="M0 5h12M0 9.500h16M4.500 0v14M8.500 2v12M12 6v8" stroke="#fff" stroke-opacity=".45" stroke-width=".6"/></svg>
<div class="a" style="left:385px;top:263px;font-size:12.200px;line-height:15px;color:#000;text-shadow:0 0 6px #fff,0 0 4px #e8f0fa">Параметры сметы - Мои сметы\Для текущей работы\Проверка расценок\Проверка</div>
<div class="a" style="left:1166px;top:262px;width:31px;height:17px;border-radius:3px;border:1px solid #5c1a12;background:linear-gradient(#e9a99c,#d6725f 45%,#c2402a 50%,#cf5a3c 90%,#e08a6a);box-shadow:inset 0 0 0 1px rgba(255,255,255,.45)"></div>
<svg style="left:1176px;top:266px" width="11" height="9" viewBox="0 0 11 9"><path d="M2.200 1.800l6.600 5.400M8.800 1.800l-6.600 5.400" stroke="#6a3a38" stroke-width="3.800" stroke-linecap="square" fill="none"/><path d="M2.200 1.800l6.600 5.400M8.800 1.800l-6.600 5.400" stroke="#fff" stroke-width="2.300" stroke-linecap="square" fill="none"/></svg>
<div class="a" style="left:363px;top:282px;width:836px;height:483px;background:#f0f0f0"></div>
<div class="a" style="left:363px;top:282px;width:170px;height:448px;background:#fff;border:1px solid #828790"></div>
<div class="a" style="left:377px;top:297px;width:1px;height:364px;background-image:linear-gradient(#9a9a9a 50%,transparent 50%);background-size:1px 2px"></div>
<div class="t" style="left:388px;top:285px">Расчет</div>
<svg style="left:375px;top:289px" width="6" height="6" viewBox="0 0 6 6"><path d="M5.500 .5v5h-5z" fill="#595959" stroke="#262626" stroke-width=".8"/></svg>
<div class="a" style="left:383px;top:292px;width:3px;height:1px;background-image:linear-gradient(90deg,#9a9a9a 50%,transparent 50%);background-size:2px 1px"></div>
<div class="t" style="left:407px;top:301px">Общие</div>
<div class="a" style="left:397px;top:308px;width:8px;height:1px;background-image:linear-gradient(90deg,#9a9a9a 50%,transparent 50%);background-size:2px 1px"></div>
<div class="t" style="left:407px;top:317px">Баз. метод</div>
<svg style="left:394px;top:320px" width="6" height="9" viewBox="0 0 6 9"><path d="M.5 .5l4.500 4-4.500 4z" fill="#fff" stroke="#a0a0a0" stroke-width=".9"/></svg>
<div class="a" style="left:402px;top:324px;width:3px;height:1px;background-image:linear-gradient(90deg,#9a9a9a 50%,transparent 50%);background-size:2px 1px"></div>
<div class="t" style="left:407px;top:333px">Рес. метод</div>
<div class="a" style="left:397px;top:340px;width:8px;height:1px;background-image:linear-gradient(90deg,#9a9a9a 50%,transparent 50%);background-size:2px 1px"></div>
<div class="t" style="left:407px;top:349px">Округление</div>
<div class="a" style="left:397px;top:356px;width:8px;height:1px;background-image:linear-gradient(90deg,#9a9a9a 50%,transparent 50%);background-size:2px 1px"></div>
<div class="t" style="left:407px;top:365px">Итоги</div>
<div class="a" style="left:397px;top:372px;width:8px;height:1px;background-image:linear-gradient(90deg,#9a9a9a 50%,transparent 50%);background-size:2px 1px"></div>
<div class="t" style="left:388px;top:381px">Регион и зона</div>
<div class="a" style="left:378px;top:388px;width:8px;height:1px;background-image:linear-gradient(90deg,#9a9a9a 50%,transparent 50%);background-size:2px 1px"></div>
<div class="t" style="left:388px;top:397px">Коэф-ты к итогам</div>
<div class="a" style="left:378px;top:404px;width:8px;height:1px;background-image:linear-gradient(90deg,#9a9a9a 50%,transparent 50%);background-size:2px 1px"></div>
<div class="t" style="left:388px;top:413px">НР и СП</div>
<svg style="left:375px;top:417px" width="6" height="6" viewBox="0 0 6 6"><path d="M5.500 .5v5h-5z" fill="#595959" stroke="#262626" stroke-width=".8"/></svg>
<div class="a" style="left:383px;top:420px;width:3px;height:1px;background-image:linear-gradient(90deg,#9a9a9a 50%,transparent 50%);background-size:2px 1px"></div>
<div class="t" style="left:407px;top:429px">Виды работ</div>
<div class="a" style="left:397px;top:436px;width:8px;height:1px;background-image:linear-gradient(90deg,#9a9a9a 50%,transparent 50%);background-size:2px 1px"></div>
<div class="t" style="left:407px;top:445px">Коэффициенты</div>
<div class="a" style="left:397px;top:452px;width:8px;height:1px;background-image:linear-gradient(90deg,#9a9a9a 50%,transparent 50%);background-size:2px 1px"></div>
<div class="t" style="left:388px;top:461px">Индексы</div>
<svg style="left:375px;top:465px" width="6" height="6" viewBox="0 0 6 6"><path d="M5.500 .5v5h-5z" fill="#595959" stroke="#262626" stroke-width=".8"/></svg>
<div class="a" style="left:383px;top:468px;width:3px;height:1px;background-image:linear-gradient(90deg,#9a9a9a 50%,transparent 50%);background-size:2px 1px"></div>
<div class="t" style="left:407px;top:477px">К позициям</div>
<div class="a" style="left:397px;top:484px;width:8px;height:1px;background-image:linear-gradient(90deg,#9a9a9a 50%,transparent 50%);background-size:2px 1px"></div>
<div class="t" style="left:407px;top:493px">К ресурсам</div>
<div class="a" style="left:397px;top:500px;width:8px;height:1px;background-image:linear-gradient(90deg,#9a9a9a 50%,transparent 50%);background-size:2px 1px"></div>
<div class="t" style="left:407px;top:509px">Доп. начисления</div>
<div class="a" style="left:397px;top:516px;width:8px;height:1px;background-image:linear-gradient(90deg,#9a9a9a 50%,transparent 50%);background-size:2px 1px"></div>
<div class="t" style="left:407px;top:525px">Автозагрузка</div>
<div class="a" style="left:397px;top:532px;width:8px;height:1px;background-image:linear-gradient(90deg,#9a9a9a 50%,transparent 50%);background-size:2px 1px"></div>
<div class="t" style="left:388px;top:541px">Переменные</div>
<div class="a" style="left:378px;top:548px;width:8px;height:1px;background-image:linear-gradient(90deg,#9a9a9a 50%,transparent 50%);background-size:2px 1px"></div>
<div class="t" style="left:388px;top:557px">Лимит. затраты</div>
<svg style="left:376px;top:560px" width="6" height="9" viewBox="0 0 6 9"><path d="M.5 .5l4.500 4-4.500 4z" fill="#fff" stroke="#a0a0a0" stroke-width=".9"/></svg>
<div class="a" style="left:383px;top:564px;width:3px;height:1px;background-image:linear-gradient(90deg,#9a9a9a 50%,transparent 50%);background-size:2px 1px"></div>
<div class="t" style="left:388px;top:573px">ОС и ССР</div>
<div class="a" style="left:378px;top:580px;width:8px;height:1px;background-image:linear-gradient(90deg,#9a9a9a 50%,transparent 50%);background-size:2px 1px"></div>
<div class="a" style="left:385px;top:588px;width:51px;height:16px;background:#f0f0f0;border:1px solid #dcdcdc;border-radius:2px"></div>
<div class="t" style="left:388px;top:589px">Подписи</div>
<div class="a" style="left:378px;top:596px;width:8px;height:1px;background-image:linear-gradient(90deg,#9a9a9a 50%,transparent 50%);background-size:2px 1px"></div>
<div class="t" style="left:388px;top:605px">Комментарий</div>
<div class="a" style="left:378px;top:612px;width:8px;height:1px;background-image:linear-gradient(90deg,#9a9a9a 50%,transparent 50%);background-size:2px 1px"></div>
<div class="t" style="left:388px;top:621px">Акт выполн. работ</div>
<div class="a" style="left:378px;top:628px;width:8px;height:1px;background-image:linear-gradient(90deg,#9a9a9a 50%,transparent 50%);background-size:2px 1px"></div>
<div class="t" style="left:388px;top:637px">Прочее</div>
<div class="a" style="left:378px;top:644px;width:8px;height:1px;background-image:linear-gradient(90deg,#9a9a9a 50%,transparent 50%);background-size:2px 1px"></div>
<div class="t" style="left:388px;top:653px">Свойства</div>
<div class="a" style="left:378px;top:660px;width:8px;height:1px;background-image:linear-gradient(90deg,#9a9a9a 50%,transparent 50%);background-size:2px 1px"></div>
<div class="a" style="left:396px;top:300px;width:1px;height:73px;background-image:linear-gradient(#9a9a9a 50%,transparent 50%);background-size:1px 2px"></div>
<div class="a" style="left:396px;top:428px;width:1px;height:25px;background-image:linear-gradient(#9a9a9a 50%,transparent 50%);background-size:1px 2px"></div>
<div class="a" style="left:396px;top:476px;width:1px;height:57px;background-image:linear-gradient(#9a9a9a 50%,transparent 50%);background-size:1px 2px"></div>
<div class="a" style="left:537px;top:282px;width:662px;height:447px;background:#fff;border-left:1px solid #a0a0a0"></div>
<div class="a" style="left:537px;top:282px;width:662px;height:20px;background:linear-gradient(90deg,#7c7c7c,#929292 25%,#9e9e9e 50%,#a0a0a0)"></div>
<div class="t b" style="left:543px;top:285px;font-size:11.500px;letter-spacing:.2px">Подписи</div>
<div class="a" style="left:538px;top:302px;width:661px;height:26px;background:linear-gradient(#fbfcfe,#e6eefa 46%,#c0d7f4 52%,#cddff7 75%,#e6effb);"></div>
<svg style="left:543px;top:308px" width="15" height="13" viewBox="0 0 15 13"><rect x=".5" y=".5" width="14" height="12" fill="#fff" stroke="#7c7c7c"/><path d="M7.500 .5v12" stroke="#7c7c7c"/><path d="M2 3h4M2 5h4M2 7h4M2 9h4M9 3h4M9 5h4M9 7h4M9 9h4" stroke="#bbb" stroke-width=".8"/></svg>
<div class="a" style="left:562px;top:308px;font-size:12px;line-height:14px;color:#1f3f7c">Справочник</div>
<div class="a" style="left:637px;top:305px;width:2px;height:21px;border-left:1px solid #9db5d8;border-right:1px solid #f4f8fe"></div>
<svg style="left:647px;top:308px" width="13" height="13" viewBox="0 0 13 13"><path d="M4.5 0.5h4v4h4v4h-4v4h-4v-4h-4v-4h4z" fill="#e4e7ec" stroke="#b0b5be" stroke-width="1"/></svg>
<div class="a" style="left:664px;top:308px;font-size:12px;line-height:14px;color:#a3b1c9">Добавить</div>
<div class="arr" style="left:721px;top:314px;border-top-color:#a3b1c9"></div>
<svg style="left:736px;top:308px" width="13" height="13" viewBox="0 0 13 13"><path d="M4.5 0.5h4v4h4v4h-4v4h-4v-4h-4v-4h4z" fill="#6fd04c" stroke="#2f9a1c" stroke-width="1"/></svg>
<div class="a" style="left:754px;top:308px;font-size:12px;line-height:14px;color:#1f3f7c">Добавить реквизит</div>
<div class="arr" style="left:863px;top:314px;border-top-color:#1f3f7c"></div>
<div class="a" style="left:878px;top:313px;width:12px;height:4px;background:#7d7d7d;border:1px solid #5a5a5a"></div>
<div class="a" style="left:896px;top:308px;font-size:12px;line-height:14px;color:#a3b1c9">Удалить</div>
<svg style="left:947px;top:308px" width="16" height="14" viewBox="0 0 16 14"><path d="M6 1l8 0-6 9h-6z" fill="#f2f2f2" stroke="#8a8f98"/><path d="M2 10l1 3h9" fill="none" stroke="#8a8f98"/></svg>
<div class="a" style="left:970px;top:305px;width:2px;height:21px;border-left:1px solid #9db5d8;border-right:1px solid #f4f8fe"></div>
<svg style="left:979px;top:307px" width="12" height="15" viewBox="0 0 12 15"><path d="M3 1l4 9M9 1l-4 9" stroke="#a0a4ab" stroke-width="1.500" fill="none"/><circle cx="3" cy="11.500" r="2" fill="none" stroke="#a0a4ab" stroke-width="1.300"/><circle cx="9" cy="11.500" r="2" fill="none" stroke="#a0a4ab" stroke-width="1.300"/></svg>
<svg style="left:1000px;top:307px" width="15" height="15" viewBox="0 0 15 15"><rect x=".5" y=".5" width="8" height="10" fill="#eceef1" stroke="#a8acb3"/><rect x="5.500" y="4.500" width="8" height="10" fill="#f4f5f7" stroke="#a8acb3"/><path d="M7 7h5M7 9h5M7 11h5" stroke="#c0c3c9"/></svg>
<svg style="left:1023px;top:307px" width="16" height="15" viewBox="0 0 16 15"><rect x=".5" y="2.500" width="11" height="12" fill="#c9ccd2" stroke="#9a9ea6"/><rect x="3" y="1" width="6" height="3" fill="#aeb2b9"/><rect x="6.500" y="6.500" width="9" height="8" fill="#f4f5f7" stroke="#a8acb3"/><path d="M8 9h6M8 11h6" stroke="#c0c3c9"/></svg>
<div class="a" style="left:1046px;top:305px;width:2px;height:21px;border-left:1px solid #9db5d8;border-right:1px solid #f4f8fe"></div>
<svg style="left:1055px;top:308px" width="13" height="13" viewBox="0 0 13 13"><path d="M6.500 .5l6 6.500h-3.500v5.500h-5v-5.500h-3.500z" fill="#d3d6dc" stroke="#979ca6"/></svg>
<svg style="left:1077px;top:308px" width="13" height="13" viewBox="0 0 13 13"><path d="M6.500 12.500l6-6.500h-3.500v-5.500h-5v5.500h-3.500z" fill="#d3d6dc" stroke="#979ca6"/></svg>
<div class="a" style="left:1099px;top:305px;width:2px;height:21px;border-left:1px solid #9db5d8;border-right:1px solid #f4f8fe"></div>
<svg style="left:1107px;top:308px" width="14" height="14" viewBox="0 0 14 14"><rect x=".5" y=".5" width="13" height="13" rx="1" fill="#6f6fe0" stroke="#3a3aa8"/><rect x="3" y="1" width="8" height="6" fill="#f4f4ff"/><rect x="3" y="9" width="8" height="4.500" fill="#2a2a7a"/><rect x="4" y="10" width="3" height="3" fill="#e0e0e0"/></svg>
<svg style="left:1129px;top:306px" width="17" height="16" viewBox="0 0 17 16"><path d="M.5 4.500h5l1.500 2h7v8h-13.500z" fill="#f0c24a" stroke="#9a7412"/><path d="M.5 14.500l3-6h13l-3 6z" fill="#fbe08a" stroke="#9a7412"/><path d="M9 3c2-2 5-2 6 0" fill="none" stroke="#6a6a6a"/><path d="M15.500 .5v3h-3" fill="none" stroke="#6a6a6a"/></svg>
<div class="a" style="left:538px;top:328px;width:643px;height:18px;background:linear-gradient(#e6f0fd,#d6e5fa);border-top:1px solid #a9b4c4;border-bottom:1px solid #a8c5ec"></div>
<div class="a" style="left:567px;top:329px;width:1px;height:17px;background:#a8c5ec"></div>
<div class="a" style="left:872px;top:329px;width:1px;height:17px;background:#a8c5ec"></div>
<div class="a" style="left:1180px;top:329px;width:1px;height:17px;background:#a8c5ec"></div>
<div class="t c" style="left:538px;top:331px;width:29px">№</div>
<div class="t c" style="left:568px;top:331px;width:304px">Текст подписи</div>
<div class="t c" style="left:873px;top:331px;width:307px">Значение подписи</div>
<div class="a" style="left:538px;top:346px;width:29px;height:16px;background:#ffffb3"></div>
<div class="a" style="left:873px;top:346px;width:307px;height:16px;background:#ffffb3"></div>
<div class="hl" style="left:538px;top:362px;width:643px"></div>
<div class="t r" style="left:538px;top:348px;width:20px">1</div>
<div class="t" style="left:570px;top:348px;letter-spacing:-.7px">СОСТАВИЛ</div>
<div class="t" style="left:875px;top:348px;letter-spacing:-.7px">ПЕТРОВ</div>
<div class="hl" style="left:538px;top:379px;width:643px"></div>
<div class="t r" style="left:538px;top:365px;width:20px">2</div>
<div class="t" style="left:570px;top:365px;letter-spacing:-.7px">СОСТАВИЛ</div>
<div class="t" style="left:875px;top:365px;letter-spacing:-.7px">СИДОРОВ</div>
<div class="hl" style="left:538px;top:396px;width:643px"></div>
<div class="t r" style="left:538px;top:382px;width:20px">3</div>
<div class="t" style="left:570px;top:382px;letter-spacing:-.7px">СОСТАВИЛ</div>
<div class="t" style="left:875px;top:382px;letter-spacing:-.7px">КОЗЛОВ</div>
<div class="hl" style="left:538px;top:413px;width:643px"></div>
<div class="t r" style="left:538px;top:399px;width:20px">4</div>
<div class="t" style="left:570px;top:399px;letter-spacing:-.7px">СОСТАВИЛ</div>
<div class="t" style="left:875px;top:399px;letter-spacing:-.7px">ОРЛОВ</div>
<div class="vl" style="left:567px;top:346px;height:68px"></div>
<div class="vl" style="left:872px;top:346px;height:68px"></div>
<div class="vl" style="left:1180px;top:346px;height:68px"></div>
<div class="a" style="left:569px;top:348px;width:1px;height:13px;background:#000"></div>
<div class="a" style="left:856px;top:346px;width:17px;height:16px;border:1px solid #6b6b6b;border-radius:2px;background:linear-gradient(#f6f6f6,#dcdcdc)"></div>
<div class="arr" style="left:860px;top:353px;border-top-color:#000;border-left-width:4px;border-right-width:4px;border-top-width:4px"></div>
<div class="a" style="left:1181px;top:329px;width:17px;height:400px;background:#f0f0f0;border-left:1px solid #e6e6e6"></div>
<svg style="left:1186px;top:336px" width="8" height="5" viewBox="0 0 8 5"><path d="M0 4.500l4-4 4 4z" fill="#9a9a9a"/></svg>
<svg style="left:1186px;top:718px" width="8" height="5" viewBox="0 0 8 5"><path d="M0 .5l4 4 4-4z" fill="#9a9a9a"/></svg>
<div class="a" style="left:1117px;top:737px;width:73px;height:21px;border:1px solid #707070;border-radius:3px;background:linear-gradient(#f4f4f4,#ececec 48%,#dedede 52%,#d0d0d0);box-shadow:inset 0 0 0 1px #fcfcfc"></div>
<div class="t c" style="left:1117px;top:741px;width:73px;font-size:11.500px">OK</div>
<div class="a" style="left:0;top:959px;width:1280px;height:25px;background:linear-gradient(#f4f8fd,#dfe9f6 2px,#cfdcec 50%,#b9c8de);border-top:1px solid #8fa6c4"></div>
<div class="a" style="left:7px;top:965px;font-size:12px;line-height:14px;color:#22375f;letter-spacing:-0.07px">Отраслевые сметные нормативы ОАО «Российские железные дороги»</div>
<div class="a" style="left:408px;top:965px;font-size:12px;line-height:14px;color:#22375f;letter-spacing:-0.05px">III - г. Москва, Московская область</div>
<div class="a" style="left:609px;top:961px;width:2px;height:22px;border-left:1px solid #a9bbd5;border-right:1px solid #eef3fa"></div>
<div class="a" style="left:649px;top:961px;width:2px;height:22px;border-left:1px solid #a9bbd5;border-right:1px solid #eef3fa"></div>
<div class="a" style="left:658px;top:965px;width:14px;height:14px;border:1px solid #5aa84a;background:linear-gradient(#a6ee98,#6fd85e)"></div>
<div class="a" style="left:676px;top:965px;font-size:12px;line-height:14px;color:#22375f;letter-spacing:0px">Баз.-индексный расчет</div>
<svg style="left:811px;top:964px" width="16" height="15" viewBox="0 0 16 15"><rect x=".5" y=".5" width="15" height="14" fill="#fff" stroke="#7c8aa8"/><rect x="1" y="1" width="14" height="2.500" fill="#6f9be8"/><path d="M1 6.500h14M1 10.500h14M4.500 3v11M11.500 3v11" stroke="#c9d2e2" stroke-width=".8"/><text x="3.500" y="13" font-size="12" font-weight="bold" font-family="Liberation Serif,serif" fill="#000">Σ</text></svg>
<div class="a" style="left:830px;top:965px;font-size:12px;line-height:14px;color:#22375f;letter-spacing:-0.3px">Итого: 1 183 222р.</div>
<div class="a" style="left:933px;top:961px;width:2px;height:22px;border-left:1px solid #a9bbd5;border-right:1px solid #eef3fa"></div>
<div class="a" style="left:939px;top:961px;width:23px;height:22px;border:1px solid #e3a82e;border-radius:2px;background:linear-gradient(#fde9a8,#fbd774 50%,#fbe08e);box-shadow:inset 0 0 0 1px #fff3c8"></div>
<svg style="left:943px;top:964px" width="15" height="16" viewBox="0 0 15 16"><rect x="3" y=".5" width="11" height="15" fill="#fdfdfd" stroke="#b4b4b4"/><rect x="5" y="2.500" width="3.500" height="1.500" fill="#9a9a9a"/><path d="M5.500 6.500h7v6.500h-7zM5.500 8.700h7M5.500 10.900h7M7.800 6.500v6.500M10.200 6.500v6.500" fill="none" stroke="#8c8c8c" stroke-width=".8"/></svg>
<svg style="left:966px;top:964px" width="15" height="16" viewBox="0 0 15 16"><rect x="3" y=".5" width="11" height="15" fill="#fdfdfd" stroke="#b4b4b4"/><rect x="5" y="2.500" width="3.500" height="1.500" fill="#9a9a9a"/><path d="M5.500 6.500h7v6.500h-7zM5.500 8.700h7M5.500 10.900h7M7.800 6.500v6.500M10.200 6.500v6.500" fill="none" stroke="#8c8c8c" stroke-width=".8"/><rect x="0" y="9" width="7" height="6" fill="#4f8be6"/></svg>
<svg style="left:990px;top:964px" width="15" height="16" viewBox="0 0 15 16"><rect x="3" y=".5" width="11" height="15" fill="#fdfdfd" stroke="#b4b4b4"/><rect x="5" y="2.500" width="3.500" height="1.500" fill="#9a9a9a"/><path d="M5.500 6.500h7v6.500h-7zM5.500 8.700h7M5.500 10.900h7M7.800 6.500v6.500M10.200 6.500v6.500" fill="none" stroke="#8c8c8c" stroke-width=".8"/><rect x="0" y="7" width="9" height="2.700" fill="#fff" stroke="#bbb" stroke-width=".3"/><rect x="0" y="9.700" width="9" height="2.700" fill="#2a4fd0"/><rect x="0" y="12.400" width="9" height="2.600" fill="#e02a20"/></svg>
<svg style="left:1014px;top:964px" width="15" height="16" viewBox="0 0 15 16"><rect x="3" y=".5" width="11" height="15" fill="#fdfdfd" stroke="#b4b4b4"/><rect x="5" y="2.500" width="3.500" height="1.500" fill="#9a9a9a"/><path d="M5.500 6.500h7v6.500h-7zM5.500 8.700h7M5.500 10.900h7M7.800 6.500v6.500M10.200 6.500v6.500" fill="none" stroke="#8c8c8c" stroke-width=".8"/><text x="-1" y="15" font-size="7" font-weight="bold" font-family="Liberation Sans,sans-serif" fill="#000" letter-spacing="-.5">ТСН</text></svg>
<svg style="left:1038px;top:964px" width="15" height="16" viewBox="0 0 15 16"><rect x="3" y=".5" width="11" height="15" fill="#fdfdfd" stroke="#b4b4b4"/><rect x="5" y="2.500" width="3.500" height="1.500" fill="#9a9a9a"/><path d="M5.500 6.500h7v6.500h-7zM5.500 8.700h7M5.500 10.900h7M7.800 6.500v6.500M10.200 6.500v6.500" fill="none" stroke="#8c8c8c" stroke-width=".8"/><rect x="6" y="6" width="8" height="9" fill="#4a9a5a" stroke="#2c6a38" stroke-width=".6"/><circle cx="3.500" cy="11.500" r="3" fill="#fff" stroke="#333"/></svg>
<svg style="left:1062px;top:964px" width="15" height="16" viewBox="0 0 15 16"><rect x="3" y=".5" width="11" height="15" fill="#fdfdfd" stroke="#b4b4b4"/><rect x="5" y="2.500" width="3.500" height="1.500" fill="#9a9a9a"/><path d="M5.500 6.500h7v6.500h-7zM5.500 8.700h7M5.500 10.900h7M7.800 6.500v6.500M10.200 6.500v6.500" fill="none" stroke="#8c8c8c" stroke-width=".8"/><text x="-1" y="15" font-size="8" font-weight="bold" font-family="Liberation Sans,sans-serif" fill="#0a2a9a" letter-spacing="-.5">НР</text></svg>
<svg style="left:1086px;top:964px" width="15" height="16" viewBox="0 0 15 16"><rect x="3" y=".5" width="11" height="15" fill="#fdfdfd" stroke="#b4b4b4"/><rect x="5" y="2.500" width="3.500" height="1.500" fill="#9a9a9a"/><path d="M5.500 6.500h7v6.500h-7zM5.500 8.700h7M5.500 10.900h7M7.800 6.500v6.500M10.200 6.500v6.500" fill="none" stroke="#8c8c8c" stroke-width=".8"/><path d="M0 13l5-5 4 3-4 4h-3z" fill="#f4f4f4" stroke="#9a9aa2" stroke-width=".8"/></svg>
<svg style="left:1110px;top:964px" width="15" height="16" viewBox="0 0 15 16"><rect x="3" y=".5" width="11" height="15" fill="#fdfdfd" stroke="#b4b4b4"/><rect x="5" y="2.500" width="3.500" height="1.500" fill="#9a9a9a"/><path d="M5.500 6.500h7v6.500h-7zM5.500 8.700h7M5.500 10.900h7M7.800 6.500v6.500M10.200 6.500v6.500" fill="none" stroke="#8c8c8c" stroke-width=".8"/><ellipse cx="4" cy="13.500" rx="4" ry="1.500" fill="#e6a91e" stroke="#8a6408" stroke-width=".5"/><ellipse cx="4" cy="11.500" rx="4" ry="1.500" fill="#f0bd3a" stroke="#8a6408" stroke-width=".5"/><ellipse cx="4" cy="9.500" rx="4" ry="1.500" fill="#f8d25c" stroke="#8a6408" stroke-width=".5"/></svg>
<svg style="left:1134px;top:964px" width="15" height="16" viewBox="0 0 15 16"><rect x="3" y=".5" width="11" height="15" fill="#fdfdfd" stroke="#b4b4b4"/><rect x="5" y="2.500" width="3.500" height="1.500" fill="#9a9a9a"/><path d="M5.500 6.500h7v6.500h-7zM5.500 8.700h7M5.500 10.900h7M7.800 6.500v6.500M10.200 6.500v6.500" fill="none" stroke="#8c8c8c" stroke-width=".8"/><path d="M0 14l4-4 2 1 4-5" stroke="#d8281c" stroke-width="1.600" fill="none"/></svg>
<svg style="left:1158px;top:964px" width="15" height="16" viewBox="0 0 15 16"><rect x="3" y=".5" width="11" height="15" fill="#fdfdfd" stroke="#b4b4b4"/><rect x="5" y="2.500" width="3.500" height="1.500" fill="#9a9a9a"/><path d="M5.500 6.500h7v6.500h-7zM5.500 8.700h7M5.500 10.900h7M7.800 6.500v6.500M10.200 6.500v6.500" fill="none" stroke="#8c8c8c" stroke-width=".8"/><rect x="0" y="10" width="11" height="4.500" fill="#1c2f6a"/><path d="M2 12v2M4 12v2M6 12v2M8 12v2" stroke="#fff" stroke-width=".7"/></svg>
<div class="a" style="left:1181px;top:961px;width:2px;height:22px;border-left:1px solid #a9bbd5;border-right:1px solid #eef3fa"></div>
<div class="a" style="left:1185px;top:965px;font-size:12px;line-height:14px;color:#a5a8b4;transform:scaleX(0.79);transform-origin:0 0">CAPS</div>
<div class="a" style="left:1220px;top:965px;font-size:12px;line-height:14px;color:#1e3c78;transform:scaleX(0.81);transform-origin:0 0">NUM</div>
<div class="a" style="left:1252px;top:965px;font-size:12px;line-height:14px;color:#a5a8b4;transform:scaleX(0.76);transform-origin:0 0">SCRL</div>
<div class="a" style="left:0;top:984px;width:1280px;height:40px;background:linear-gradient(90deg,#7f92b2,#8598b7 55px,#97acca 70px,#a8c1dd 92px,#a8c1dd 1022px,#93a9c7 1040px,#7e93b1 1062px,#7b90ae 1262px)"></div>
<div class="a" style="left:0;top:984px;width:1280px;height:1px;background:#3d4c63"></div>
<div class="a" style="left:0;top:985px;width:1280px;height:1px;background:rgba(255,255,255,.4)"></div>
<svg style="left:8px;top:985px" width="38" height="38" viewBox="0 0 38 38"><defs><radialGradient id="so1" cx=".5" cy=".95" r=".75"><stop offset="0" stop-color="#1fd2f8"/><stop offset=".35" stop-color="#0a6fc0"/><stop offset=".7" stop-color="#0a3f88"/><stop offset="1" stop-color="#123462"/></radialGradient><linearGradient id="so2" x1="0" y1="0" x2="0" y2="1"><stop offset="0" stop-color="#c9d8ea" stop-opacity=".95"/><stop offset="1" stop-color="#7f9cc0" stop-opacity=".55"/></linearGradient></defs><circle cx="19" cy="19" r="18" fill="url(#so1)" stroke="#0d2c5a" stroke-width="1"/><circle cx="19" cy="19" r="17" fill="none" stroke="#cfe2f5" stroke-opacity=".8" stroke-width=".8"/><path d="M2.500 17a16.500 16.500 0 0 1 33 0c-8 4-25 4-33 0z" fill="url(#so2)"/><path d="M11.500 9c2.500-1.500 5-1.500 8 0l-1.500 7.500c-3-1.500-5.500-1.500-8.500 0z" fill="#ea5a24"/><path d="M20.500 9.500c3 1.500 5.500 1.500 8.500 0l-2 7.500c-3 1.500-5.500 1.500-8 0z" fill="#8cc63f"/><path d="M9 18c3-1.500 5.500-1.500 8.500 0l-2 8c-2.500-1.500-5-1.500-8 0z" fill="#3fa4ee"/><path d="M18.500 18.500c3 1.500 5.500 1.500 8 0l-2 8c-2.500 1.500-5 1.500-8 0z" fill="#fbc21e"/></svg>
<div class="a" style="left:184px;top:985px;width:59px;height:39px;border:1px solid #4d6283;border-radius:3px;background:linear-gradient(160deg,#e0e9f6,#c9d8ed 40%,#b5c8e3 55%,#bccde7);box-shadow:inset 0 0 0 1px rgba(255,255,255,.55)"></div>
<div class="a" style="left:246px;top:985px;width:59px;height:39px;border:1px solid #4d6283;border-radius:3px;background:linear-gradient(160deg,#e0e9f6,#c9d8ed 40%,#b5c8e3 55%,#bccde7);box-shadow:inset 0 0 0 1px rgba(255,255,255,.55)"></div>
<div class="a" style="left:375px;top:985px;width:57px;height:39px;border:1px solid #4d6283;border-radius:3px;background:linear-gradient(160deg,#e0e9f6,#c9d8ed 40%,#b5c8e3 55%,#bccde7);box-shadow:inset 0 0 0 1px rgba(255,255,255,.55)"></div>
<div class="a" style="left:370px;top:985px;width:54px;height:39px;border:1px solid #4d6283;border-radius:3px;background:linear-gradient(160deg,#e0e9f6,#c9d8ed 40%,#b5c8e3 55%,#bccde7);box-shadow:inset 0 0 0 1px rgba(255,255,255,.55)"></div>
<div class="a" style="left:432px;top:985px;width:59px;height:39px;border:1px solid #4d6283;border-radius:3px;background:linear-gradient(160deg,#e0e9f6,#c9d8ed 40%,#b5c8e3 55%,#bccde7);box-shadow:inset 0 0 0 1px rgba(255,255,255,.55)"></div>
<div class="a" style="left:499px;top:985px;width:54px;height:39px;border:1px solid #4d6283;border-radius:3px;background:linear-gradient(160deg,#e0e9f6,#c9d8ed 40%,#b5c8e3 55%,#bccde7);box-shadow:inset 0 0 0 1px rgba(255,255,255,.55)"></div>
<div class="a" style="left:494px;top:985px;width:54px;height:39px;border:1px solid #4d6283;border-radius:3px;background:linear-gradient(160deg,#e0e9f6,#c9d8ed 40%,#b5c8e3 55%,#bccde7);box-shadow:inset 0 0 0 1px rgba(255,255,255,.55)"></div>
<div class="a" style="left:555px;top:985px;width:60px;height:39px;border:1px solid #4d6283;border-radius:3px;background:linear-gradient(160deg,#e0e9f6,#c9d8ed 40%,#b5c8e3 55%,#bccde7);box-shadow:inset 0 0 0 1px rgba(255,255,255,.55)"></div>
<svg style="left:74px;top:993px" width="28" height="26" viewBox="0 0 28 26"><rect x="5.500" y="1.500" width="21" height="22" fill="#c4e2f6" stroke="#8ec0e4"/><rect x="3.500" y="1" width="21" height="23" fill="#cfe8f8" stroke="#8ec0e4"/><rect x="1" y=".5" width="21" height="24" fill="#a9d5f1" stroke="#78b4e0"/><circle cx="11.500" cy="12.500" r="8.500" fill="#f4821a"/><circle cx="11.500" cy="12.500" r="8" fill="none" stroke="#fba84c" stroke-width=".8"/><path d="M8.500 7.300l8.500 5.200-8.500 5.200z" fill="#fff"/></svg>
<svg style="left:136px;top:987px" width="33" height="33" viewBox="0 0 33 33"><defs><radialGradient id="tbg136" cx=".4" cy=".3" r=".8"><stop offset="0" stop-color="#5aa0e6"/><stop offset=".6" stop-color="#2a66bc"/><stop offset="1" stop-color="#173f88"/></radialGradient></defs><path d="M3 13c1-7 8-12 15-11c8 1 14 8 13 16c-1 7-7 13-14 13c3-1 5-3 6-5l-18-6c-2-2-3-4-2-7z" fill="url(#tbg136)"/><path d="M22 4c5 3 8 9 6 15c-1 5-5 9-10 11c5-4 7-9 6-14c-1-5-4-8-9-9c2-2 5-3 7-3z" fill="#1b4590"/><path d="M3 13c0-4 3-8 7-9c3 0 5 1 6 3l-9 8z" fill="#4a90e0"/><path d="M9 7l3 1-2 1z" fill="#f2b01e"/><path d="M4.500 15.500l15-3.500 4.500 11-14 6.500z" fill="#f3efe8" stroke="#b9b4aa" stroke-width=".7"/><path d="M4.500 15.500l10.500 6.500 4.500-10M10 29.500l5-7.500 9 1" fill="none" stroke="#b9b4aa" stroke-width=".8"/><path d="M6 27c1 2 3 4 6 4c-2-1-3-2-3-4z" fill="#173f88"/></svg>
<svg style="left:445px;top:987px" width="33" height="33" viewBox="0 0 33 33"><defs><radialGradient id="tbg445" cx=".4" cy=".3" r=".8"><stop offset="0" stop-color="#5aa0e6"/><stop offset=".6" stop-color="#2a66bc"/><stop offset="1" stop-color="#173f88"/></radialGradient></defs><path d="M3 13c1-7 8-12 15-11c8 1 14 8 13 16c-1 7-7 13-14 13c3-1 5-3 6-5l-18-6c-2-2-3-4-2-7z" fill="url(#tbg445)"/><path d="M22 4c5 3 8 9 6 15c-1 5-5 9-10 11c5-4 7-9 6-14c-1-5-4-8-9-9c2-2 5-3 7-3z" fill="#1b4590"/><path d="M3 13c0-4 3-8 7-9c3 0 5 1 6 3l-9 8z" fill="#4a90e0"/><path d="M9 7l3 1-2 1z" fill="#f2b01e"/><path d="M4.500 15.500l15-3.500 4.500 11-14 6.500z" fill="#f3efe8" stroke="#b9b4aa" stroke-width=".7"/><path d="M4.500 15.500l10.500 6.500 4.500-10M10 29.500l5-7.500 9 1" fill="none" stroke="#b9b4aa" stroke-width=".8"/><path d="M6 27c1 2 3 4 6 4c-2-1-3-2-3-4z" fill="#173f88"/></svg>
<svg style="left:197px;top:987px" width="32" height="33" viewBox="0 0 32 33"><defs><radialGradient id="ffg" cx=".6" cy=".3" r=".8"><stop offset="0" stop-color="#5ab0f0"/><stop offset=".6" stop-color="#2a62c0"/><stop offset="1" stop-color="#1a3a8a"/></radialGradient><linearGradient id="ffo" x1="0" y1="0" x2=".6" y2="1"><stop offset="0" stop-color="#f7a81e"/><stop offset=".5" stop-color="#ee6a1a"/><stop offset="1" stop-color="#e0481a"/></linearGradient></defs><circle cx="16.500" cy="15" r="12.500" fill="url(#ffg)"/><path d="M3 11c-3 9 3 20 13.500 20.500c9 0 15-7 14-16c-1 5-5 9-11 9.500c-6 0-9-4-8-8.500c.6-2.500 3-3.500 5-3c-2-1.500-3-2.500-3-4.500c1-1 3-1.500 4-1.500c-2-1.500-5-2-7-1c-1-1.500-1-3-.5-4.500c-3 2-6 5-7 9z" fill="url(#ffo)"/><path d="M30.500 15.500c.5-6-3-11-8-13c4 3 6 8 5 13c-.5 4-3 7-7 9c6-.5 9.500-4.500 10-9z" fill="#f9cf3a"/></svg>
<svg style="left:258px;top:988px" width="34" height="32" viewBox="0 0 34 32"><rect x="1" y="0" width="8" height="9" fill="#dc4a30" stroke="#f8b8a6" stroke-width=".7"/><rect x="1" y="0" width="8" height="2.500" fill="#f08a6e"/><rect x="9" y="3" width="8" height="9" fill="#dc4a30" stroke="#f8b8a6" stroke-width=".7"/><rect x="9" y="3" width="8" height="2.500" fill="#f08a6e"/><rect x="17" y="3" width="8" height="9" fill="#dc4a30" stroke="#f8b8a6" stroke-width=".7"/><rect x="17" y="3" width="8" height="2.500" fill="#f08a6e"/><rect x="9" y="11" width="8" height="9" fill="#dc4a30" stroke="#f8b8a6" stroke-width=".7"/><rect x="9" y="11" width="8" height="2.500" fill="#f08a6e"/><rect x="2" y="9" width="7" height="9" fill="#3a6cc8" stroke="#a9c6f2" stroke-width=".7"/><rect x="2" y="9" width="7" height="2.500" fill="#7fa8e8"/><rect x="17" y="11" width="8" height="9" fill="#3a6cc8" stroke="#a9c6f2" stroke-width=".7"/><rect x="17" y="11" width="8" height="2.500" fill="#7fa8e8"/><rect x="2" y="17" width="8" height="9" fill="#3a6cc8" stroke="#a9c6f2" stroke-width=".7"/><rect x="2" y="17" width="8" height="2.500" fill="#7fa8e8"/><rect x="10" y="19" width="8" height="9" fill="#3a6cc8" stroke="#a9c6f2" stroke-width=".7"/><rect x="10" y="19" width="8" height="2.500" fill="#7fa8e8"/><rect x="18" y="19" width="8" height="9" fill="#3a6cc8" stroke="#a9c6f2" stroke-width=".7"/><rect x="18" y="19" width="8" height="2.500" fill="#7fa8e8"/><rect x="26" y="21" width="7" height="9" fill="#3a6cc8" stroke="#a9c6f2" stroke-width=".7"/><rect x="26" y="21" width="7" height="2.500" fill="#7fa8e8"/></svg>
<svg style="left:321px;top:989px" width="32" height="32" viewBox="0 0 32 32"><rect x="14" y="4" width="17" height="24" fill="#fff" stroke="#1f7244"/><path d="M17 8h5M24 8h5M17 12h5M24 12h5M17 16h5M24 16h5M17 20h5M24 20h5M17 24h5M24 24h5" stroke="#1f7244" stroke-width="2"/><path d="M1 4l18-3.500v31l-18-3.500z" fill="#1f7244"/><text x="4.500" y="22" font-size="16" font-weight="bold" font-family="Liberation Sans,sans-serif" fill="#fff">X</text></svg>
<svg style="left:379px;top:990px" width="34" height="31" viewBox="0 0 34 31"><defs><linearGradient id="exf" x1="0" y1="0" x2="0" y2="1"><stop offset="0" stop-color="#fcf0c0"/><stop offset="1" stop-color="#f3d470"/></linearGradient><linearGradient id="exs" x1="0" y1="0" x2="0" y2="1"><stop offset="0" stop-color="#a6dcf8"/><stop offset="1" stop-color="#4fa8e0"/></linearGradient></defs><path d="M1.500 2.500h14l1.500 2h14.500v22h-30z" fill="#f1d88c" stroke="#d4b458"/><rect x="3.500" y="2" width="3.500" height="2" fill="#1fb83a"/><rect x="7" y="2" width="7" height="2" fill="#fff"/><path d="M9.500 5.500h13.500l1.500 2h7v4h-22z" fill="#f1d88c" stroke="#d4b458" stroke-width=".8"/><rect x="12" y="4.500" width="3" height="2" fill="#e03a2a"/><rect x="15" y="4.500" width="7" height="2" fill="#fff"/><rect x="20.500" y="7.500" width="3" height="2" fill="#2a90e8"/><rect x="23.500" y="7.500" width="6" height="2" fill="#fff"/><path d="M1.500 8.500h17l2 2.500h11v16h-30z" fill="url(#exf)" stroke="#d9ba5c"/><path d="M6 17.500h21.500a1.500 1.500 0 0 1 1.500 1.500v10.500h-6.500v-6h-11.500v6h-6.500v-10.500a1.500 1.500 0 0 1 1.500-1.500z" fill="url(#exs)" stroke="#3a96d8" stroke-width=".9"/><path d="M8.500 13v11M3 18.500h11" stroke="#fff" stroke-opacity=".8" stroke-width=".8"/></svg>
<svg style="left:504px;top:988px" width="32" height="30" viewBox="0 0 32 30"><defs><linearGradient id="gac" x1="0" y1="0" x2="0" y2="1"><stop offset="0" stop-color="#ee161c"/><stop offset=".55" stop-color="#c60a12"/><stop offset="1" stop-color="#96040a"/></linearGradient></defs><path d="M1 1l26 .8 3 1.500h-29z" fill="#f4c8c0"/><rect x="1" y="2.500" width="29" height="25.500" fill="url(#gac)"/><path d="M1 28h29l-1 1h-27z" fill="#5a0206"/><path d="M6.500 24c-1.500-1-.5-2.500 2-4c4-2.500 6.500-8 6.500-13c0-2-1.500-2-1.500 0c0 5 4 10.500 9 11.500c2.500 .5 3.500-.5 2.500-1.500c-1-1-4-1-8 0c-4 1-8 3-10.500 7z" fill="none" stroke="#fff" stroke-width="1.300"/></svg>
<svg style="left:571px;top:987px" width="27" height="32" viewBox="0 0 27 32"><g fill="#efe01e" stroke="#6a6a08" stroke-width="1.300"><path d="M15.500 1v5"/><rect x="5.500" y="5.500" width="15" height="12"/><path d="M1.500 17.500h24v10h-4v4h-5v-4h-6v4h-5v-4h-4z"/></g><path d="M13 6h7v11h-4z" fill="#f4b428" fill-opacity=".6"/><circle cx="13" cy="11.500" r="3.200" fill="#62d23a" stroke="#4a5a08" stroke-width="1"/><rect x="11" y="17" width="4.500" height="11" fill="#62d23a" stroke="#4a8a18" stroke-width=".6"/><rect x="5" y="20.500" width="3" height="3" fill="#5a5a08"/><rect x="18.500" y="20.500" width="3" height="3" fill="#5a5a08"/></svg>
<div class="a" style="left:1066px;top:994px;font-size:12px;line-height:14px;color:#fff">RU</div>
<svg style="left:1098px;top:1001px" width="9" height="6" viewBox="0 0 9 6"><path d="M0 5.500l4.500-5 4.500 5z" fill="#fff"/></svg>
<svg style="left:1118px;top:996px" width="18" height="18" viewBox="0 0 18 18"><circle cx="8" cy="8" r="6.500" fill="#5ac83a" stroke="#2e8a1a" stroke-width="2" stroke-dasharray="3 1.500"/><circle cx="11" cy="11" r="5" fill="#e0282a" stroke="#fff" stroke-width="1"/><rect x="8" y="10" width="6" height="2" fill="#fff"/></svg>
<svg style="left:1142px;top:996px" width="17" height="17" viewBox="0 0 17 17"><rect x="4.500" y="3.500" width="11" height="8" fill="#4f5f78" stroke="#fff" stroke-width="1.400"/><path d="M7 15.500h6M10 12v3" stroke="#fff" stroke-width="1.400"/><path d="M3 1v5M1 2h4M3 6v8" stroke="#fff" stroke-width="1.300" fill="none"/></svg>
<svg style="left:1166px;top:996px" width="17" height="17" viewBox="0 0 17 17"><path d="M1 6h3l4-4v13l-4-4h-3z" fill="#fff"/><path d="M10.500 5.500c1.500 2 1.500 4 0 6M12.500 3.500c2.500 3 2.500 7 0 10" stroke="#fff" stroke-width="1.200" fill="none"/></svg>
<div class="a c" style="left:1190px;top:990px;width:74px;font-size:12px;line-height:14px;color:#fff;text-align:center;letter-spacing:-.4px">10:49</div>
<div class="a c" style="left:1190px;top:1007px;width:74px;font-size:12px;line-height:14px;color:#fff;text-align:center;letter-spacing:-.6px">19.03.2014</div>
<div class="a" style="left:1266px;top:985px;width:14px;height:39px;border-left:1px solid #414f66;box-shadow:inset 1px 1px 0 rgba(255,255,255,.35);background:linear-gradient(100deg,#9fafc6,#7f90aa 50%,#6c7d97)"></div>
</body></html>
